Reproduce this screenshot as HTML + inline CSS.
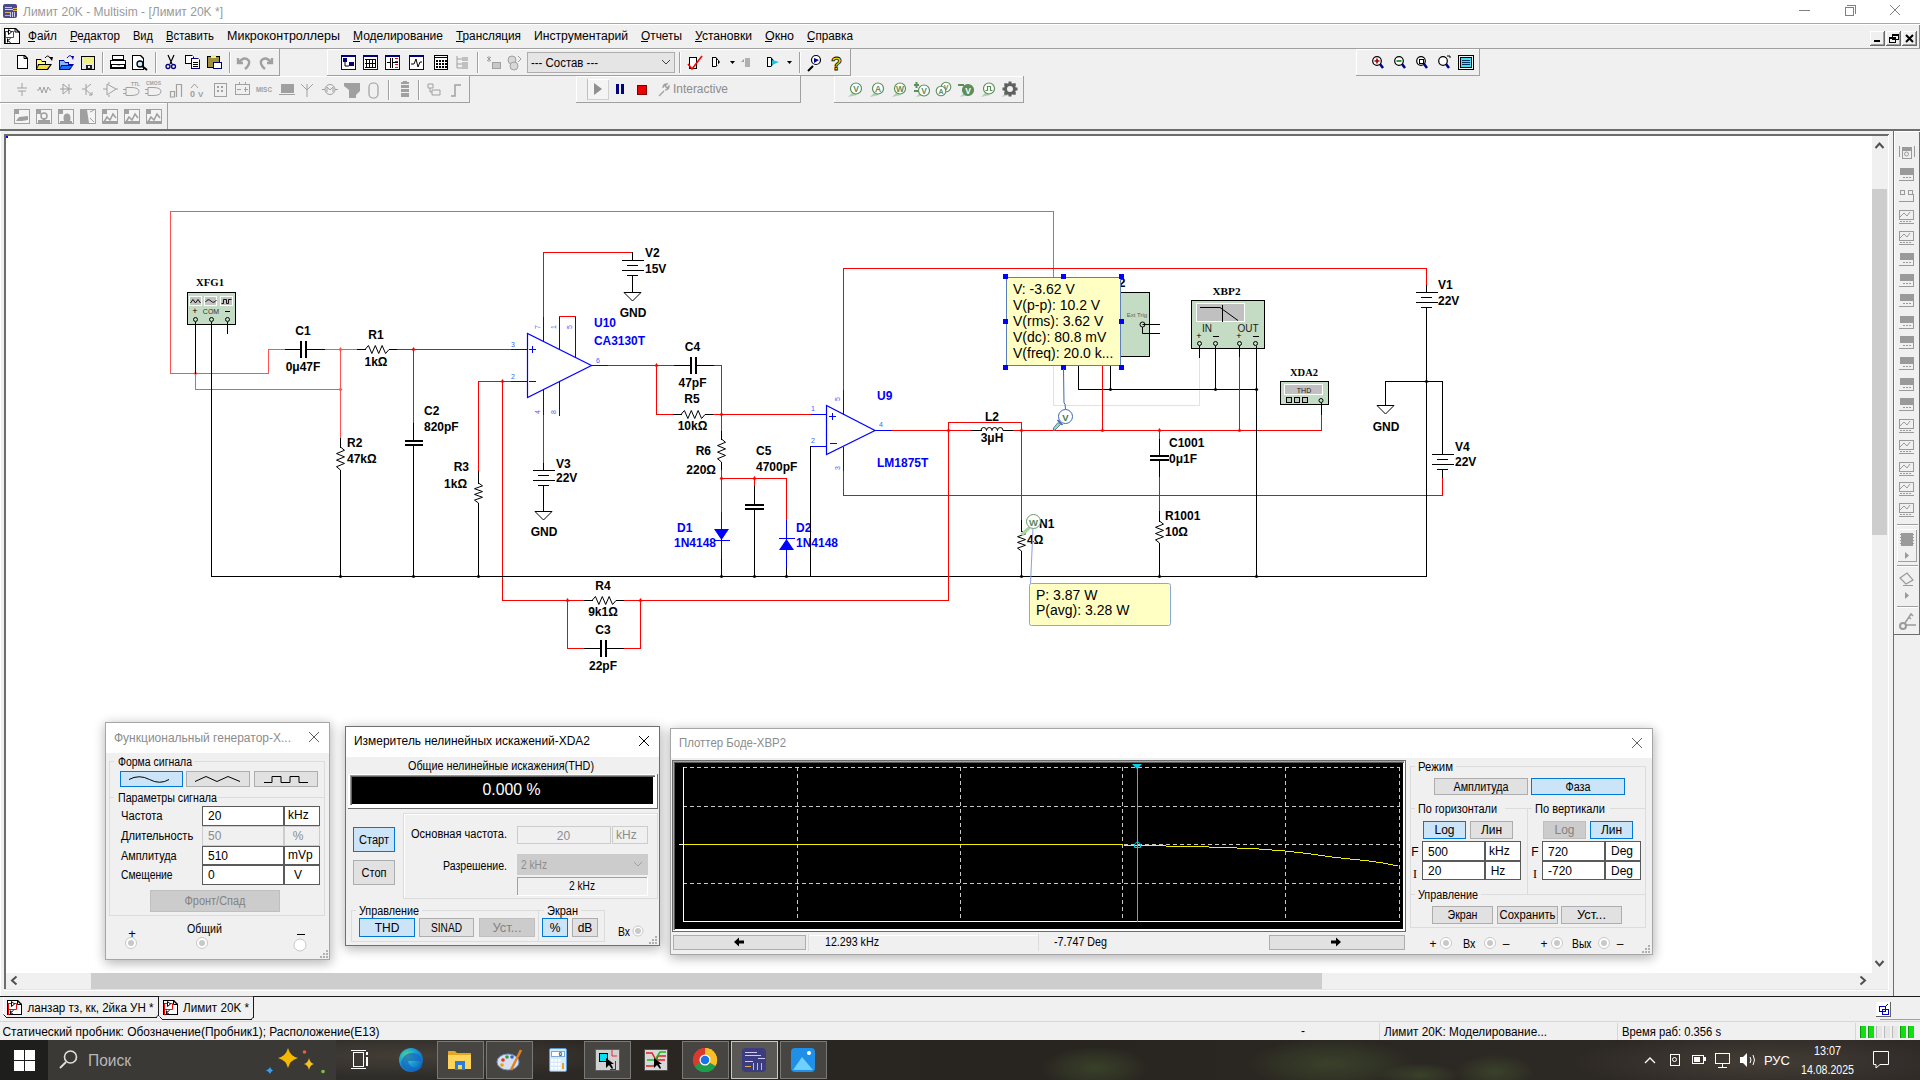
<!DOCTYPE html>
<html><head><meta charset="utf-8"><title>Multisim</title><style>html,body{margin:0;padding:0;width:1920px;height:1080px;overflow:hidden;background:#f0f0f0}svg{display:block}text{white-space:pre}</style></head><body><svg width="1920" height="1080" viewBox="0 0 1920 1080"><rect x="0" y="0" width="1920" height="1080" fill="#f0f0f0"/>
<rect x="0" y="0" width="1920" height="23" fill="#ffffff"/>
<rect x="0" y="23" width="1920" height="1" fill="#a8a8a8"/>
<rect x="3" y="4" width="14" height="14" rx="2" fill="#4a4a8c"/>
<rect x="5" y="7" width="7" height="1" fill="#c8c8e8"/>
<rect x="5" y="9" width="8" height="1" fill="#d0d0f0"/>
<rect x="5" y="12" width="5" height="1" fill="#e0b040"/>
<rect x="5" y="15" width="5" height="1" fill="#e0b040"/>
<rect x="13" y="8" width="4" height="1" fill="#e0b040"/>
<rect x="13" y="10" width="4" height="1" fill="#e0b040"/>
<rect x="10" y="12" width="1" height="5" fill="#c8c8e8"/>
<rect x="12" y="12" width="1" height="5" fill="#c8c8e8"/>
<rect x="14" y="12" width="1" height="5" fill="#c8c8e8"/>
<text x="23" y="16" font-family="Liberation Sans" font-size="12" fill="#999999" font-weight="normal" text-anchor="start" textLength="200" lengthAdjust="spacingAndGlyphs" >Лимит 20K - Multisim - [Лимит 20K *]</text>
<rect x="1799" y="10" width="11" height="1" fill="#808080"/>
<rect x="1845" y="7" width="9" height="9" fill="#ffffff"/>
<rect x="1845" y="7" width="9" height="1" fill="#808080"/>
<rect x="1845" y="15" width="9" height="1" fill="#808080"/>
<rect x="1845" y="7" width="1" height="9" fill="#808080"/>
<rect x="1853" y="7" width="1" height="9" fill="#808080"/>
<rect x="1847" y="5" width="9" height="1" fill="#808080"/>
<rect x="1855" y="5" width="1" height="9" fill="#808080"/>
<rect x="1845" y="7" width="9" height="9" fill="#ffffff"/>
<rect x="1845" y="7" width="9" height="1" fill="#808080"/>
<rect x="1845" y="15" width="9" height="1" fill="#808080"/>
<rect x="1845" y="7" width="1" height="9" fill="#808080"/>
<rect x="1853" y="7" width="1" height="9" fill="#808080"/>
<path d="M1890,5 L1900,15 M1900,5 L1890,15" stroke="#808080" stroke-width="1" fill="none" />
<rect x="0" y="48" width="1920" height="1" fill="#a0a0a0"/>
<rect x="0" y="24" width="1920" height="1" fill="#ffffff"/>
<rect x="0" y="24" width="1" height="24" fill="#ffffff"/>
<rect x="1919" y="25" width="1" height="23" fill="#8a8a8a"/>
<path d="M4,28 L16,28 L20,32 L20,44 L4,44 Z" fill="#000000" />
<path d="M5,29 L15,29 L19,33 L19,43 L5,43 Z" fill="#ffffff" />
<path d="M15,28 L15,32 L20,32" stroke="#000000" stroke-width="1" fill="none" />
<path d="M5,31.5 L9,31.5 M11,31.5 L13.5,31.5 L13.5,37.5 L5.5,37.5 M5.5,31.5 L5.5,43" stroke="#ff0000" stroke-width="1" fill="none" />
<path d="M8.5,29.5 L8.5,34.5 L11.5,32 Z M7.5,32 L8.5,32" stroke="#000000" stroke-width="1" fill="none" />
<path d="M7.5,38.5 L7.5,42.5 M7.5,40.5 L10.5,38.5 M7.5,40.5 L10.5,42.5" stroke="#000000" stroke-width="1" fill="none" />
<text x="28" y="40" font-family="Liberation Sans" font-size="12" fill="#000000" font-weight="normal" text-anchor="start" textLength="29" lengthAdjust="spacingAndGlyphs" >Файл</text>
<rect x="28" y="41" width="7" height="1" fill="#000000"/>
<text x="70" y="40" font-family="Liberation Sans" font-size="12" fill="#000000" font-weight="normal" text-anchor="start" textLength="50" lengthAdjust="spacingAndGlyphs" >Редактор</text>
<rect x="70" y="41" width="7" height="1" fill="#000000"/>
<text x="133" y="40" font-family="Liberation Sans" font-size="12" fill="#000000" font-weight="normal" text-anchor="start" textLength="20" lengthAdjust="spacingAndGlyphs" >Вид</text>
<text x="166" y="40" font-family="Liberation Sans" font-size="12" fill="#000000" font-weight="normal" text-anchor="start" textLength="48" lengthAdjust="spacingAndGlyphs" >Вставить</text>
<rect x="166" y="41" width="7" height="1" fill="#000000"/>
<text x="227" y="40" font-family="Liberation Sans" font-size="12" fill="#000000" font-weight="normal" text-anchor="start" textLength="113" lengthAdjust="spacingAndGlyphs" >Микроконтроллеры</text>
<text x="353" y="40" font-family="Liberation Sans" font-size="12" fill="#000000" font-weight="normal" text-anchor="start" textLength="90" lengthAdjust="spacingAndGlyphs" >Моделирование</text>
<rect x="353" y="41" width="7" height="1" fill="#000000"/>
<text x="456" y="40" font-family="Liberation Sans" font-size="12" fill="#000000" font-weight="normal" text-anchor="start" textLength="65" lengthAdjust="spacingAndGlyphs" >Трансляция</text>
<rect x="456" y="41" width="7" height="1" fill="#000000"/>
<text x="534" y="40" font-family="Liberation Sans" font-size="12" fill="#000000" font-weight="normal" text-anchor="start" textLength="94" lengthAdjust="spacingAndGlyphs" >Инструментарий</text>
<text x="641" y="40" font-family="Liberation Sans" font-size="12" fill="#000000" font-weight="normal" text-anchor="start" textLength="41" lengthAdjust="spacingAndGlyphs" >Отчеты</text>
<rect x="641" y="41" width="7" height="1" fill="#000000"/>
<text x="695" y="40" font-family="Liberation Sans" font-size="12" fill="#000000" font-weight="normal" text-anchor="start" textLength="57" lengthAdjust="spacingAndGlyphs" >Установки</text>
<rect x="695" y="41" width="7" height="1" fill="#000000"/>
<text x="765" y="40" font-family="Liberation Sans" font-size="12" fill="#000000" font-weight="normal" text-anchor="start" textLength="29" lengthAdjust="spacingAndGlyphs" >Окно</text>
<rect x="765" y="41" width="7" height="1" fill="#000000"/>
<text x="807" y="40" font-family="Liberation Sans" font-size="12" fill="#000000" font-weight="normal" text-anchor="start" textLength="46" lengthAdjust="spacingAndGlyphs" >Справка</text>
<rect x="807" y="41" width="7" height="1" fill="#000000"/>
<rect x="1870" y="31" width="15" height="15" fill="#f0f0f0"/>
<rect x="1870" y="31" width="15" height="1" fill="#ffffff"/>
<rect x="1870" y="31" width="1" height="15" fill="#ffffff"/>
<rect x="1870" y="45" width="15" height="1" fill="#696969"/>
<rect x="1884" y="31" width="1" height="15" fill="#696969"/>
<rect x="1871" y="44" width="13" height="1" fill="#a0a0a0"/>
<rect x="1883" y="32" width="1" height="13" fill="#a0a0a0"/>
<rect x="1886" y="31" width="15" height="15" fill="#f0f0f0"/>
<rect x="1886" y="31" width="15" height="1" fill="#ffffff"/>
<rect x="1886" y="31" width="1" height="15" fill="#ffffff"/>
<rect x="1886" y="45" width="15" height="1" fill="#696969"/>
<rect x="1900" y="31" width="1" height="15" fill="#696969"/>
<rect x="1887" y="44" width="13" height="1" fill="#a0a0a0"/>
<rect x="1899" y="32" width="1" height="13" fill="#a0a0a0"/>
<rect x="1902" y="31" width="15" height="15" fill="#f0f0f0"/>
<rect x="1902" y="31" width="15" height="1" fill="#ffffff"/>
<rect x="1902" y="31" width="1" height="15" fill="#ffffff"/>
<rect x="1902" y="45" width="15" height="1" fill="#696969"/>
<rect x="1916" y="31" width="1" height="15" fill="#696969"/>
<rect x="1903" y="44" width="13" height="1" fill="#a0a0a0"/>
<rect x="1915" y="32" width="1" height="13" fill="#a0a0a0"/>
<rect x="1874" y="40" width="6" height="2" fill="#000"/>
<rect x="1889" y="37" width="7" height="1" fill="#000"/>
<rect x="1889" y="42" width="7" height="1" fill="#000"/>
<rect x="1889" y="37" width="1" height="6" fill="#000"/>
<rect x="1895" y="37" width="1" height="6" fill="#000"/>
<rect x="1889" y="38" width="7" height="1" fill="#000"/>
<rect x="1892" y="34" width="7" height="1" fill="#000"/>
<rect x="1892" y="39" width="7" height="1" fill="#000"/>
<rect x="1892" y="34" width="1" height="6" fill="#000"/>
<rect x="1898" y="34" width="1" height="6" fill="#000"/>
<rect x="1892" y="35" width="7" height="1" fill="#000"/>
<path d="M1906,35 L1913,42 M1913,35 L1906,42" stroke="#000" stroke-width="2" fill="none" />
<rect x="0" y="49" width="280" height="1" fill="#ffffff"/>
<rect x="0" y="49" width="1" height="27" fill="#ffffff"/>
<rect x="0" y="75" width="280" height="1" fill="#a0a0a0"/>
<rect x="279" y="49" width="1" height="27" fill="#a0a0a0"/>
<rect x="327" y="49" width="524" height="1" fill="#ffffff"/>
<rect x="327" y="49" width="1" height="27" fill="#ffffff"/>
<rect x="327" y="75" width="524" height="1" fill="#a0a0a0"/>
<rect x="850" y="49" width="1" height="27" fill="#a0a0a0"/>
<rect x="1356" y="49" width="124" height="1" fill="#ffffff"/>
<rect x="1356" y="49" width="1" height="27" fill="#ffffff"/>
<rect x="1356" y="75" width="124" height="1" fill="#a0a0a0"/>
<rect x="1479" y="49" width="1" height="27" fill="#a0a0a0"/>
<rect x="0" y="76" width="470" height="1" fill="#ffffff"/>
<rect x="0" y="76" width="1" height="27" fill="#ffffff"/>
<rect x="0" y="102" width="470" height="1" fill="#a0a0a0"/>
<rect x="469" y="76" width="1" height="27" fill="#a0a0a0"/>
<rect x="576" y="76" width="225" height="1" fill="#ffffff"/>
<rect x="576" y="76" width="1" height="27" fill="#ffffff"/>
<rect x="576" y="102" width="225" height="1" fill="#a0a0a0"/>
<rect x="800" y="76" width="1" height="27" fill="#a0a0a0"/>
<rect x="834" y="76" width="190" height="1" fill="#ffffff"/>
<rect x="834" y="76" width="1" height="27" fill="#ffffff"/>
<rect x="834" y="102" width="190" height="1" fill="#a0a0a0"/>
<rect x="1023" y="76" width="1" height="27" fill="#a0a0a0"/>
<rect x="0" y="103" width="168" height="1" fill="#ffffff"/>
<rect x="0" y="103" width="1" height="27" fill="#ffffff"/>
<rect x="0" y="129" width="168" height="1" fill="#a0a0a0"/>
<rect x="167" y="103" width="1" height="27" fill="#a0a0a0"/>
<rect x="0" y="129" width="1920" height="2" fill="#6d6d6d"/>
<rect x="102" y="52" width="1" height="21" fill="#a0a0a0"/>
<rect x="103" y="52" width="1" height="21" fill="#ffffff"/>
<rect x="155" y="52" width="1" height="21" fill="#a0a0a0"/>
<rect x="156" y="52" width="1" height="21" fill="#ffffff"/>
<rect x="229" y="52" width="1" height="21" fill="#a0a0a0"/>
<rect x="230" y="52" width="1" height="21" fill="#ffffff"/>
<rect x="477" y="52" width="1" height="21" fill="#a0a0a0"/>
<rect x="478" y="52" width="1" height="21" fill="#ffffff"/>
<rect x="679" y="52" width="1" height="21" fill="#a0a0a0"/>
<rect x="680" y="52" width="1" height="21" fill="#ffffff"/>
<rect x="799" y="52" width="1" height="21" fill="#a0a0a0"/>
<rect x="800" y="52" width="1" height="21" fill="#ffffff"/>
<path d="M17,55 L25,55 L28,58 L28,69 L17,69 Z" fill="#000" />
<path d="M18,56 L24,56 L27,59 L27,68 L18,68 Z" fill="#fff" />
<path d="M24,55.5 L24,58.5 L28,58.5" stroke="#000" stroke-width="1" fill="none" />
<path d="M36,59 L41,59 L42,61 L46,61 L46,64 L52,64 L48,70 L36,70 Z" fill="#000" />
<path d="M37,60 L41,60 L42,62 L45,62 L45,64 L38,64 L37,68 Z" fill="#ffff80" />
<path d="M39,65 L50,65 L47,69 L37,69 Z" fill="#f0e040" />
<path d="M45,58 Q48,54 50,58" stroke="#000" stroke-width="1" fill="none" />
<path d="M49,57 L53,57 L52,61 Z" fill="#000" />
<path d="M59,60 L64,60 L65,62 L69,62 L69,64 L74,64 L70,70 L59,70 Z" fill="#0000a0" />
<path d="M60,61 L64,61 L65,63 L68,63 L68,65 L61,65 L60,68 Z" fill="#80b8ff" />
<path d="M62,66 L72,66 L69,69 L60,69 Z" fill="#1f6fff" />
<path d="M67,58 Q70,54 72,57" stroke="#0000a0" stroke-width="1" fill="none" />
<path d="M71,56 L74,56 L73,60 Z" fill="#0000a0" />
<path d="M81,56 L95,56 L95,70 L81,70 Z" fill="#000" />
<path d="M82,57 L94,57 L94,69 L82,69 Z" fill="#e8e8e8" />
<rect x="84" y="57" width="9" height="6" fill="#f0f080"/>
<rect x="86" y="65" width="6" height="4" fill="#202020"/>
<rect x="88" y="66" width="2" height="2" fill="#e8e8e8"/>
<path d="M112,55 L124,55 L124,60 L112,60 Z" fill="#000" />
<rect x="113" y="56" width="10" height="3" fill="#fff"/>
<path d="M110,60 L126,60 L126,69 L110,69 Z" fill="#000" />
<rect x="111" y="61" width="14" height="3" fill="#fff"/>
<rect x="112" y="65" width="12" height="2" fill="#fff"/>
<rect x="117" y="65" width="3" height="1" fill="#e0d000"/>
<path d="M132,55 L141,55 L144,58 L144,70 L132,70 Z" fill="#000" />
<path d="M133,56 L140,56 L143,59 L143,69 L133,69 Z" fill="#fff" />
<circle cx="140" cy="64" r="3" stroke="#000" stroke-width="1.3" fill="#c0f0ff"/>
<path d="M142,66 L147,70" stroke="#000" stroke-width="2" fill="none" />
<path d="M168,55 L172,64 M174,55 L170,64" stroke="#000" stroke-width="1.2" fill="none" />
<circle cx="168" cy="66.5" r="2" stroke="#000080" stroke-width="1.3" fill="none"/>
<circle cx="173.5" cy="66.5" r="2" stroke="#000080" stroke-width="1.3" fill="none"/>
<path d="M185,55 L192,55 L194,57 L194,64 L185,64 Z" fill="#000" />
<rect x="186" y="56" width="7" height="7" fill="#fff"/>
<path d="M191,58 L198,58 L200,60 L200,69 L191,69 Z" fill="#000080" />
<rect x="192" y="59" width="7" height="9" fill="#fff"/>
<rect x="193" y="62" width="5" height="1" fill="#000"/>
<rect x="193" y="64" width="5" height="1" fill="#000"/>
<rect x="193" y="66" width="5" height="1" fill="#000"/>
<path d="M207,56 L220,56 L220,68 L207,68 Z" fill="#000" />
<rect x="208" y="57" width="11" height="10" fill="#a09040"/>
<rect x="211" y="55" width="5" height="3" fill="#f0f080"/>
<path d="M213,62 L222,62 L222,69 L213,69 Z" fill="#000080" />
<rect x="214" y="63" width="7" height="5" fill="#fff"/>
<path d="M238,58 L238,63 L243,63 M238,63 Q245,55 249,61 Q250,65 245,69" stroke="#a0a0a0" stroke-width="2.4" fill="none" />
<path d="M272,58 L272,63 L267,63 M272,63 Q265,55 261,61 Q260,65 265,69" stroke="#a0a0a0" stroke-width="2.4" fill="none" />
<rect x="341" y="55" width="15" height="15" fill="#fff"/>
<rect x="341" y="55" width="15" height="1" fill="#000080"/>
<rect x="341" y="69" width="15" height="1" fill="#000080"/>
<rect x="341" y="55" width="1" height="15" fill="#000080"/>
<rect x="355" y="55" width="1" height="15" fill="#000080"/>
<rect x="341" y="56" width="15" height="1" fill="#000080"/>
<rect x="343" y="58" width="4" height="4" fill="#000080"/>
<rect x="349" y="62" width="5" height="4" fill="#000080"/>
<path d="M345,62 L345,66 L349,66" stroke="#000" stroke-width="1" fill="none" />
<rect x="363" y="55" width="15" height="15" fill="#fff"/>
<rect x="363" y="55" width="15" height="1" fill="#000080"/>
<rect x="363" y="69" width="15" height="1" fill="#000080"/>
<rect x="363" y="55" width="1" height="15" fill="#000080"/>
<rect x="377" y="55" width="1" height="15" fill="#000080"/>
<rect x="363" y="56" width="15" height="1" fill="#000080"/>
<rect x="366" y="59" width="1" height="9" fill="#000"/>
<rect x="369" y="59" width="1" height="9" fill="#000"/>
<rect x="372" y="59" width="1" height="9" fill="#000"/>
<rect x="375" y="59" width="1" height="9" fill="#000"/>
<rect x="365" y="59" width="11" height="1" fill="#000"/>
<rect x="365" y="63" width="11" height="1" fill="#000"/>
<rect x="365" y="67" width="11" height="1" fill="#000"/>
<rect x="385" y="55" width="15" height="15" fill="#fff"/>
<rect x="385" y="55" width="15" height="1" fill="#000080"/>
<rect x="385" y="69" width="15" height="1" fill="#000080"/>
<rect x="385" y="55" width="1" height="15" fill="#000080"/>
<rect x="399" y="55" width="1" height="15" fill="#000080"/>
<rect x="385" y="56" width="15" height="1" fill="#000080"/>
<rect x="390" y="58" width="1" height="10" fill="#000"/>
<rect x="392" y="58" width="1" height="10" fill="#000"/>
<rect x="387" y="62" width="3" height="1" fill="#000"/>
<rect x="393" y="62" width="5" height="1" fill="#000"/>
<rect x="395" y="58" width="3" height="1" fill="#ff0000"/>
<rect x="395" y="61" width="3" height="1" fill="#ff0000"/>
<rect x="395" y="64" width="3" height="1" fill="#ff0000"/>
<rect x="395" y="67" width="3" height="1" fill="#ff0000"/>
<rect x="409" y="55" width="15" height="15" fill="#fff"/>
<rect x="409" y="55" width="15" height="1" fill="#000080"/>
<rect x="409" y="69" width="15" height="1" fill="#000080"/>
<rect x="409" y="55" width="1" height="15" fill="#000080"/>
<rect x="423" y="55" width="1" height="15" fill="#000080"/>
<rect x="409" y="56" width="15" height="1" fill="#000080"/>
<path d="M411,64 L414,64 L416,59 L418,67 L420,62 L422,62" stroke="#000" stroke-width="1" fill="none" />
<rect x="434" y="55" width="14" height="15" fill="#fff"/>
<rect x="434" y="55" width="14" height="1" fill="#000"/>
<rect x="434" y="69" width="14" height="1" fill="#000"/>
<rect x="434" y="55" width="1" height="15" fill="#000"/>
<rect x="447" y="55" width="1" height="15" fill="#000"/>
<rect x="434" y="57" width="14" height="1" fill="#000"/>
<rect x="436" y="60" width="2" height="2" fill="#000"/>
<rect x="439" y="60" width="2" height="2" fill="#000"/>
<rect x="442" y="60" width="2" height="2" fill="#000"/>
<rect x="445" y="60" width="2" height="2" fill="#000"/>
<rect x="436" y="63" width="2" height="2" fill="#000"/>
<rect x="439" y="63" width="2" height="2" fill="#000"/>
<rect x="442" y="63" width="2" height="2" fill="#000"/>
<rect x="445" y="63" width="2" height="2" fill="#000"/>
<rect x="436" y="66" width="2" height="2" fill="#000"/>
<rect x="439" y="66" width="2" height="2" fill="#000"/>
<rect x="442" y="66" width="2" height="2" fill="#000"/>
<rect x="445" y="66" width="2" height="2" fill="#000"/>
<path d="M457,56 L457,68 M457,59 L462,59 M457,64 L462,64 M457,68 L462,68" stroke="#a0a0a0" stroke-width="1" fill="none" />
<rect x="462" y="57" width="6" height="4" fill="#c0c0c0"/>
<rect x="462" y="62" width="6" height="4" fill="#c0c0c0"/>
<rect x="462" y="66" width="6" height="3" fill="#c0c0c0"/>
<path d="M487,57 L491,61 M487,61 L491,57 M489,56 L489,62" stroke="#a0a0a0" stroke-width="1" fill="none" />
<rect x="492" y="62" width="8" height="6" fill="#c8c8c8"/>
<rect x="492" y="62" width="9" height="1" fill="#a0a0a0"/>
<rect x="492" y="68" width="9" height="1" fill="#a0a0a0"/>
<rect x="492" y="62" width="1" height="7" fill="#a0a0a0"/>
<rect x="500" y="62" width="1" height="7" fill="#a0a0a0"/>
<circle cx="512" cy="60" r="4" stroke="#a0a0a0" stroke-width="1" fill="#d8d8d8"/>
<circle cx="514" cy="66" r="4" stroke="#a0a0a0" stroke-width="1" fill="#d8d8d8"/>
<path d="M518,56 L521,59 L518,62" stroke="#a0a0a0" stroke-width="1" fill="none" />
<rect x="527" y="52" width="148" height="21" fill="#e5e5e5"/>
<rect x="527" y="52" width="148" height="1" fill="#adadad"/>
<rect x="527" y="72" width="148" height="1" fill="#adadad"/>
<rect x="527" y="52" width="1" height="21" fill="#adadad"/>
<rect x="674" y="52" width="1" height="21" fill="#adadad"/>
<text x="531" y="67" font-family="Liberation Sans" font-size="12" fill="#000" font-weight="normal" text-anchor="start" textLength="67" lengthAdjust="spacingAndGlyphs" >--- Состав ---</text>
<path d="M662,60 L666,64 L670,60" stroke="#404040" stroke-width="1" fill="none" />
<path d="M689,57 L697,57 L697,69 L689,69 Z" fill="#000" />
<rect x="690" y="58" width="6" height="10" fill="#fff"/>
<path d="M688,64 L692,69 L702,56" stroke="#ff0000" stroke-width="1.6" fill="none" />
<path d="M712,57 L716,57 L720,62 L716,67 L712,67 Z" fill="#000" />
<rect x="713" y="58" width="3" height="8" fill="#fff"/>
<rect x="717" y="60" width="1" height="5" fill="#fff"/>
<path d="M730,61 L735,61 L732.5,64 Z" fill="#000" />
<path d="M745,58 L750,58 L750,67 L745,67 Z" fill="#b0b0b0" />
<path d="M744,62 L741,62 L744,59 Z" fill="#a0a0a0" />
<path d="M767,57 L771,57 L775,62 L771,67 L767,67 Z" fill="#000" />
<rect x="768" y="58" width="3" height="8" fill="#fff"/>
<path d="M772,60 L779,62 L772,65 Z" fill="#20c0e0" />
<path d="M787,61 L792,61 L789.5,64 Z" fill="#000" />
<circle cx="816" cy="60" r="4.5" stroke="#000" stroke-width="1.2" fill="#fff"/>
<path d="M813,66 L808,71" stroke="#000" stroke-width="2" fill="none" />
<path d="M814,58 L819,60 L814,63 Z" fill="#0000a0" />
<text x="836.5" y="70" font-family="Liberation Sans" font-size="18" fill="#e8e000" font-weight="bold" text-anchor="middle" stroke="#000" stroke-width="0.8">?</text>
<circle cx="1377" cy="61" r="4.3" stroke="#000" stroke-width="1.2" fill="#fff"/>
<path d="M1380,64 L1383,68" stroke="#000090" stroke-width="2.5" fill="none" />
<path d="M1374.5,61 L1379.5,61 M1377,58.5 L1377,63.5" stroke="#a00000" stroke-width="1.6" fill="none" />
<circle cx="1399" cy="61" r="4.3" stroke="#000" stroke-width="1.2" fill="#fff"/>
<path d="M1402,64 L1405,68" stroke="#000090" stroke-width="2.5" fill="none" />
<path d="M1396.5,61 L1401.5,61" stroke="#008000" stroke-width="1.6" fill="none" />
<circle cx="1421" cy="61" r="4.3" stroke="#000" stroke-width="1.2" fill="#fff"/>
<path d="M1424,64 L1427,68" stroke="#000090" stroke-width="2.5" fill="none" />
<rect x="1419" y="59" width="5" height="1" fill="#000"/>
<rect x="1419" y="63" width="5" height="1" fill="#000"/>
<rect x="1419" y="59" width="1" height="5" fill="#000"/>
<rect x="1423" y="59" width="1" height="5" fill="#000"/>
<circle cx="1443" cy="61" r="4.3" stroke="#000" stroke-width="1.2" fill="#fff"/>
<path d="M1446,64 L1449,68" stroke="#000090" stroke-width="2.5" fill="none" />
<path d="M1447,56 L1450,56 L1450,58" stroke="#000" stroke-width="1" fill="none" />
<rect x="1458" y="55" width="16" height="1" fill="#000"/>
<rect x="1458" y="69" width="16" height="1" fill="#000"/>
<rect x="1458" y="55" width="1" height="15" fill="#000"/>
<rect x="1473" y="55" width="1" height="15" fill="#000"/>
<rect x="1460" y="57" width="12" height="11" fill="#000"/>
<rect x="1461" y="58" width="10" height="9" fill="#40e0f0"/>
<rect x="1462" y="60" width="8" height="1" fill="#003060"/>
<rect x="1462" y="62" width="8" height="1" fill="#003060"/>
<rect x="1462" y="64" width="8" height="1" fill="#003060"/>
<path d="M17,88 L27,88 M18,91 L26,91 M22,83 L22,88 M22,91 L22,96" stroke="#a0a0a0" stroke-width="1" fill="none" />
<path d="M37,90 L39,90 L40,87 L42,93 L44,87 L46,93 L48,87 L50,90 L51,90" stroke="#a0a0a0" stroke-width="1" fill="none" />
<path d="M60,89 L72,89 M63,84 L63,94 L69,89 Z M69,84 L69,94" stroke="#a0a0a0" stroke-width="1" fill="none" />
<path d="M82,89 L86,89 M86,84 L86,95 M86,88 L91,84 M86,90 L92,95 M89,95 L92,95 L92,92" stroke="#a0a0a0" stroke-width="1" fill="none" />
<path d="M103,89 L107,89 M107,84 L107,95 L116,89 Z M116,89 L118,89 M109,84 L109,82 M109,95 L109,97" stroke="#a0a0a0" stroke-width="1" fill="none" />
<text x="131" y="86" font-family="Liberation Sans" font-size="6" fill="#a0a0a0" font-weight="bold" text-anchor="start" textLength="9" lengthAdjust="spacingAndGlyphs" >TTL</text>
<path d="M126,87.5 L131,87.5 Q139,87.5 139,91.5 Q139,95.5 131,95.5 L126,95.5 Z M126,89.5 L123,89.5 M126,93.5 L123,93.5" stroke="#a0a0a0" stroke-width="1" fill="none" />
<text x="146" y="85" font-family="Liberation Sans" font-size="6" fill="#a0a0a0" font-weight="bold" text-anchor="start" textLength="15" lengthAdjust="spacingAndGlyphs" >CMOS</text>
<path d="M148,87.5 L153,87.5 Q161,87.5 161,91.5 Q161,95.5 153,95.5 L148,95.5 Z M148,89.5 L145,89.5 M148,93.5 L145,93.5" stroke="#a0a0a0" stroke-width="1" fill="none" />
<path d="M170.5,97 L170.5,91.5 L174.5,91.5 L174.5,97 Z M176.5,97 L176.5,84.5 L181.5,84.5 L181.5,97" stroke="#a0a0a0" stroke-width="1.2" fill="none" />
<text x="190" y="97" font-family="Liberation Sans" font-size="9" fill="#a0a0a0" font-weight="bold" text-anchor="start" >0</text>
<text x="198" y="97" font-family="Liberation Sans" font-size="8" fill="#a0a0a0" font-weight="bold" text-anchor="start" >V</text>
<path d="M191,88 L194.5,84 L198,88" stroke="#a0a0a0" stroke-width="1" fill="none" />
<rect x="214" y="83" width="13" height="1" fill="#a0a0a0"/>
<rect x="214" y="96" width="13" height="1" fill="#a0a0a0"/>
<rect x="214" y="83" width="1" height="14" fill="#a0a0a0"/>
<rect x="226" y="83" width="1" height="14" fill="#a0a0a0"/>
<rect x="217" y="86" width="2" height="2" fill="#a0a0a0"/>
<rect x="221" y="86" width="2" height="2" fill="#a0a0a0"/>
<rect x="217" y="90" width="2" height="2" fill="#a0a0a0"/>
<rect x="221" y="90" width="2" height="2" fill="#a0a0a0"/>
<rect x="235" y="84" width="15" height="1" fill="#a0a0a0"/>
<rect x="235" y="94" width="15" height="1" fill="#a0a0a0"/>
<rect x="235" y="84" width="1" height="11" fill="#a0a0a0"/>
<rect x="249" y="84" width="1" height="11" fill="#a0a0a0"/>
<rect x="237" y="89" width="4" height="1" fill="#a0a0a0"/>
<rect x="244" y="89" width="4" height="1" fill="#a0a0a0"/>
<rect x="245" y="87" width="1" height="5" fill="#a0a0a0"/>
<rect x="239" y="82" width="1" height="3" fill="#a0a0a0"/>
<rect x="245" y="82" width="1" height="3" fill="#a0a0a0"/>
<text x="256" y="92" font-family="Liberation Sans" font-size="8" fill="#a0a0a0" font-weight="bold" text-anchor="start" textLength="16" lengthAdjust="spacingAndGlyphs" >MISC</text>
<rect x="281" y="84" width="13" height="9" fill="#a0a0a0"/>
<rect x="279" y="94" width="16" height="1" fill="#a0a0a0"/>
<path d="M301,84 L307,90 L313,84 M307,84 L307,97" stroke="#a0a0a0" stroke-width="1" fill="none" />
<circle cx="330" cy="89.5" r="5" stroke="#a0a0a0" stroke-width="1" fill="none"/>
<path d="M322,89.5 L325,89.5 M335,89.5 L338,89.5 M327,92 L327,87 L330,90 L333,87 L333,92" stroke="#a0a0a0" stroke-width="1" fill="none" />
<path d="M344,83 L360,83 L360,91 L356,95 L356,98 L349,98 L349,90 L344,86 Z" fill="#a0a0a0" />
<rect x="369" y="83" width="9" height="15" rx="4" fill="none" stroke="#a0a0a0" stroke-width="1.2"/>
<rect x="388" y="80" width="1" height="20" fill="#a0a0a0"/>
<rect x="389" y="80" width="1" height="20" fill="#ffffff"/>
<rect x="401" y="82" width="8" height="15" fill="#a0a0a0"/>
<rect x="403" y="81" width="4" height="1" fill="#a0a0a0"/>
<rect x="399" y="84" width="12" height="1" fill="#f0f0f0"/>
<rect x="399" y="88" width="12" height="1" fill="#f0f0f0"/>
<rect x="399" y="92" width="12" height="1" fill="#f0f0f0"/>
<rect x="418" y="80" width="1" height="20" fill="#a0a0a0"/>
<rect x="419" y="80" width="1" height="20" fill="#ffffff"/>
<path d="M428,84 L433,84 L433,88 L428,88 Z M432,90 L440,90 L440,95 L432,95 Z M430,88 L430,92 L432,92" stroke="#a0a0a0" stroke-width="1" fill="none" />
<path d="M451,96 L455,96 L455,85 L461,85" stroke="#a0a0a0" stroke-width="1.5" fill="none" />
<rect x="587" y="79" width="22" height="21" fill="#f4f4f4"/>
<rect x="587" y="79" width="22" height="1" fill="#d0d0d0"/>
<rect x="587" y="99" width="22" height="1" fill="#d0d0d0"/>
<rect x="587" y="79" width="1" height="21" fill="#d0d0d0"/>
<rect x="608" y="79" width="1" height="21" fill="#d0d0d0"/>
<rect x="587" y="79" width="22" height="1" fill="#ffffff"/>
<rect x="587" y="79" width="1" height="21" fill="#c0c0c0"/>
<path d="M594,83 L602,89 L594,95 Z" fill="#909090" />
<rect x="616" y="84" width="3" height="10" fill="#000080"/>
<rect x="621" y="84" width="3" height="10" fill="#000080"/>
<rect x="637" y="85" width="10" height="10" fill="#ee0000"/>
<rect x="637" y="85" width="10" height="1" fill="#800000"/>
<rect x="637" y="94" width="10" height="1" fill="#800000"/>
<rect x="637" y="85" width="1" height="10" fill="#800000"/>
<rect x="646" y="85" width="1" height="10" fill="#800000"/>
<path d="M659,96 L664,91 M663,88 Q663,84 667,84 L665,86 L667,88 L669,86 Q669,90 665,90" stroke="#a0a0a0" stroke-width="1.3" fill="none" />
<text x="673" y="93" font-family="Liberation Sans" font-size="12" fill="#8c8c8c" font-weight="normal" text-anchor="start" textLength="55" lengthAdjust="spacingAndGlyphs" >Interactive</text>
<path d="M848,97 L853,92 L857,95 Z" fill="#a8d4a8" />
<circle cx="856" cy="88.5" r="5.5" stroke="#5b8f5b" stroke-width="1.2" fill="#ffffff"/>
<text x="856" y="92.0" font-family="Liberation Sans" font-size="8.5" fill="#5b8f5b" font-weight="bold" text-anchor="middle" >V</text>
<path d="M870,97 L875,92 L879,95 Z" fill="#a8d4a8" />
<circle cx="878" cy="88.5" r="5.5" stroke="#5b8f5b" stroke-width="1.2" fill="#ffffff"/>
<text x="878" y="92.0" font-family="Liberation Sans" font-size="8.5" fill="#5b8f5b" font-weight="bold" text-anchor="middle" >A</text>
<path d="M892,97 L897,92 L901,95 Z" fill="#a8d4a8" />
<circle cx="900" cy="88.5" r="5.5" stroke="#5b8f5b" stroke-width="1.2" fill="#ffffff"/>
<text x="900" y="92.0" font-family="Liberation Sans" font-size="8.5" fill="#5b8f5b" font-weight="bold" text-anchor="middle" >W</text>
<rect x="914" y="84" width="5" height="2" fill="#5b8f5b"/>
<rect x="915.5" y="82" width="2" height="6" fill="#5b8f5b"/>
<rect x="914" y="90" width="5" height="2" fill="#5b8f5b"/>
<path d="M916,97 L921,92 L925,95 Z" fill="#a8d4a8" />
<circle cx="924" cy="90.5" r="5.5" stroke="#5b8f5b" stroke-width="1.2" fill="#ffffff"/>
<text x="924" y="94.0" font-family="Liberation Sans" font-size="8.5" fill="#5b8f5b" font-weight="bold" text-anchor="middle" >V</text>
<circle cx="946" cy="87" r="4.8" stroke="#5b8f5b" stroke-width="1.1" fill="#fff"/>
<text x="946" y="90" font-family="Liberation Sans" font-size="7" fill="#5b8f5b" font-weight="bold" text-anchor="middle" >V</text>
<circle cx="941" cy="91" r="4.8" stroke="#5b8f5b" stroke-width="1.1" fill="#fff"/>
<text x="941" y="94" font-family="Liberation Sans" font-size="7" fill="#5b8f5b" font-weight="bold" text-anchor="middle" >A</text>
<rect x="958" y="84" width="6" height="2" fill="#5b8f5b"/>
<path d="M960,97 L965,92 L969,95 Z" fill="#a8d4a8" />
<circle cx="968" cy="90" r="5.5" stroke="#5b8f5b" stroke-width="1.2" fill="#5b8f5b"/>
<text x="968" y="93.5" font-family="Liberation Sans" font-size="8.5" fill="#ffffff" font-weight="bold" text-anchor="middle" >V</text>
<path d="M981,97 L986,92 L990,95 Z" fill="#a8d4a8" />
<circle cx="989" cy="88.5" r="5.5" stroke="#5b8f5b" stroke-width="1.2" fill="#ffffff"/>
<path d="M985.5,90.5 L987.5,90.5 L987.5,86.5 L990.5,86.5 L990.5,90.5 L992.5,90.5" stroke="#5b8f5b" stroke-width="1.2" fill="none" />
<path d="M1002,97 L1006,92 L1009,95 Z" fill="#a8d4a8" />
<circle cx="1010" cy="89" r="4.5" stroke="#606060" stroke-width="3" fill="none"/>
<circle cx="1010" cy="89" r="2" stroke="none" stroke-width="1" fill="#f0f0f0"/>
<rect x="1014.50" y="87.50" width="3" height="3" fill="#606060"/>
<rect x="1012.74" y="91.74" width="3" height="3" fill="#606060"/>
<rect x="1008.50" y="93.50" width="3" height="3" fill="#606060"/>
<rect x="1004.26" y="91.74" width="3" height="3" fill="#606060"/>
<rect x="1002.50" y="87.50" width="3" height="3" fill="#606060"/>
<rect x="1004.26" y="83.26" width="3" height="3" fill="#606060"/>
<rect x="1008.50" y="81.50" width="3" height="3" fill="#606060"/>
<rect x="1012.74" y="83.26" width="3" height="3" fill="#606060"/>
<rect x="14" y="109" width="16" height="15" fill="#a0a0a0"/>
<rect x="15" y="110" width="14" height="13" fill="#f4f4f4"/>
<rect x="15" y="110" width="4" height="4" fill="#a0a0a0"/>
<path d="M16,121 L19,117 L28,116 L28,120 L22,121 Z" fill="#a0a0a0" />
<rect x="36" y="109" width="16" height="15" fill="#a0a0a0"/>
<rect x="37" y="110" width="14" height="13" fill="#f4f4f4"/>
<rect x="37" y="110" width="4" height="4" fill="#a0a0a0"/>
<circle cx="44" cy="116" r="3" stroke="#a0a0a0" stroke-width="1.5" fill="none"/>
<rect x="43" y="118" width="2" height="5" fill="#a0a0a0"/>
<rect x="38" y="120" width="12" height="3" fill="#a0a0a0"/>
<rect x="58" y="109" width="16" height="15" fill="#a0a0a0"/>
<rect x="59" y="110" width="14" height="13" fill="#f4f4f4"/>
<rect x="59" y="110" width="4" height="4" fill="#a0a0a0"/>
<ellipse cx="67" cy="118" rx="3.5" ry="4.5" fill="#a0a0a0"/>
<rect x="60" y="121" width="12" height="2" fill="#a0a0a0"/>
<rect x="80" y="109" width="16" height="15" fill="#a0a0a0"/>
<rect x="81" y="110" width="14" height="13" fill="#f4f4f4"/>
<rect x="81" y="110" width="4" height="4" fill="#a0a0a0"/>
<path d="M81,110 L87,110 L89,123 L81,123 Z" fill="#a0a0a0" />
<path d="M90,112 L94,110 M90,118 L94,122" stroke="#a0a0a0" stroke-width="1" fill="none" />
<rect x="102" y="109" width="16" height="15" fill="#a0a0a0"/>
<rect x="103" y="110" width="14" height="13" fill="#f4f4f4"/>
<rect x="103" y="110" width="4" height="4" fill="#a0a0a0"/>
<path d="M104,122 L107,117 L110,120 L113,114 L116,118" stroke="#a0a0a0" stroke-width="1.6" fill="none" />
<rect x="103" y="121" width="14" height="2" fill="#a0a0a0"/>
<rect x="124" y="109" width="16" height="15" fill="#a0a0a0"/>
<rect x="125" y="110" width="14" height="13" fill="#f4f4f4"/>
<rect x="125" y="110" width="4" height="4" fill="#a0a0a0"/>
<path d="M126,122 L129,117 L132,120 L135,114 L138,118" stroke="#a0a0a0" stroke-width="1.6" fill="none" />
<rect x="125" y="121" width="14" height="2" fill="#a0a0a0"/>
<rect x="146" y="109" width="16" height="15" fill="#a0a0a0"/>
<rect x="147" y="110" width="14" height="13" fill="#f4f4f4"/>
<rect x="147" y="110" width="4" height="4" fill="#a0a0a0"/>
<path d="M148,122 L151,117 L154,120 L157,114 L160,118" stroke="#a0a0a0" stroke-width="1.6" fill="none" />
<rect x="147" y="121" width="14" height="2" fill="#a0a0a0"/>
<rect x="0" y="131" width="1" height="865" fill="#ffffff"/>
<rect x="1893" y="130" width="1" height="867" fill="#6d6d6d"/>
<rect x="0" y="996" width="1895" height="1" fill="#6d6d6d"/>
<rect x="4" y="134" width="1885" height="2" fill="#6d6d6d"/>
<rect x="4" y="134" width="2" height="856" fill="#6d6d6d"/>
<rect x="6" y="136" width="1866" height="837" fill="#ffffff"/>
<rect x="6" y="136" width="2" height="2" fill="#0000ff"/>
<rect x="4" y="989" width="1885" height="1" fill="#e3e3e3"/>
<rect x="4" y="990" width="1885" height="1" fill="#ffffff"/>
<rect x="1888" y="135" width="1" height="856" fill="#ffffff"/>
<rect x="1872" y="136" width="16" height="853" fill="#f0f0f0"/>
<rect x="1872" y="189" width="15" height="346" fill="#cdcdcd"/>
<path d="M1875.5,148 L1879.5,143.5 L1883.5,148" stroke="#505050" stroke-width="2" fill="none" />
<path d="M1875.5,961 L1879.5,965.5 L1883.5,961" stroke="#505050" stroke-width="2" fill="none" />
<rect x="6" y="973" width="1866" height="16" fill="#f0f0f0"/>
<rect x="91" y="973" width="1231" height="16" fill="#cdcdcd"/>
<path d="M16.5,976.5 L12,980.5 L16.5,984.5" stroke="#505050" stroke-width="2" fill="none" />
<path d="M1860.5,976.5 L1865,980.5 L1860.5,984.5" stroke="#505050" stroke-width="2" fill="none" />
<rect x="1895" y="131" width="25" height="504" fill="#f0f0f0"/>
<rect x="1894" y="131" width="1" height="504" fill="#ffffff"/>
<rect x="1919" y="131" width="1" height="504" fill="#6d6d6d"/>
<rect x="1894" y="634" width="26" height="1" fill="#6d6d6d"/>
<rect x="1894" y="131" width="26" height="1" fill="#ffffff"/>
<rect x="1903" y="147" width="8" height="4" fill="#9a9a9a"/>
<rect x="1902" y="147" width="10" height="1" fill="#9a9a9a"/>
<rect x="1902" y="158" width="10" height="1" fill="#9a9a9a"/>
<rect x="1902" y="147" width="1" height="12" fill="#9a9a9a"/>
<rect x="1911" y="147" width="1" height="12" fill="#9a9a9a"/>
<rect x="1899" y="146" width="1" height="11" fill="#9a9a9a"/>
<rect x="1914" y="146" width="1" height="11" fill="#9a9a9a"/>
<circle cx="1906.5" cy="154" r="2" stroke="#9a9a9a" stroke-width="1" fill="none"/>
<rect x="1900" y="168" width="14" height="7" fill="#9a9a9a"/>
<rect x="1899" y="180" width="15" height="1" fill="#9a9a9a"/>
<rect x="1913" y="175" width="1" height="6" fill="#9a9a9a"/>
<rect x="1903" y="177" width="2" height="1" fill="#9a9a9a"/>
<rect x="1906" y="177" width="2" height="1" fill="#9a9a9a"/>
<rect x="1909" y="177" width="2" height="1" fill="#9a9a9a"/>
<rect x="1900" y="190" width="5" height="1" fill="#9a9a9a"/>
<rect x="1900" y="194" width="5" height="1" fill="#9a9a9a"/>
<rect x="1900" y="190" width="1" height="5" fill="#9a9a9a"/>
<rect x="1904" y="190" width="1" height="5" fill="#9a9a9a"/>
<rect x="1908" y="190" width="5" height="1" fill="#9a9a9a"/>
<rect x="1908" y="194" width="5" height="1" fill="#9a9a9a"/>
<rect x="1908" y="190" width="1" height="5" fill="#9a9a9a"/>
<rect x="1912" y="190" width="1" height="5" fill="#9a9a9a"/>
<rect x="1899" y="201" width="15" height="1" fill="#9a9a9a"/>
<rect x="1913" y="194" width="1" height="8" fill="#9a9a9a"/>
<rect x="1899" y="210" width="15" height="1" fill="#9a9a9a"/>
<rect x="1899" y="219" width="15" height="1" fill="#9a9a9a"/>
<rect x="1899" y="210" width="1" height="10" fill="#9a9a9a"/>
<rect x="1913" y="210" width="1" height="10" fill="#9a9a9a"/>
<path d="M1900,217 L1904,213 L1907,216 L1910,212" stroke="#9a9a9a" stroke-width="1" fill="none" />
<rect x="1899" y="223" width="15" height="1" fill="#9a9a9a"/>
<rect x="1900" y="221" width="2" height="1" fill="#9a9a9a"/>
<rect x="1903" y="221" width="2" height="1" fill="#9a9a9a"/>
<rect x="1906" y="221" width="2" height="1" fill="#9a9a9a"/>
<rect x="1909" y="221" width="2" height="1" fill="#9a9a9a"/>
<rect x="1899" y="231" width="15" height="1" fill="#9a9a9a"/>
<rect x="1899" y="240" width="15" height="1" fill="#9a9a9a"/>
<rect x="1899" y="231" width="1" height="10" fill="#9a9a9a"/>
<rect x="1913" y="231" width="1" height="10" fill="#9a9a9a"/>
<path d="M1900,238 L1904,234 L1907,237 L1910,233" stroke="#9a9a9a" stroke-width="1" fill="none" />
<rect x="1899" y="244" width="15" height="1" fill="#9a9a9a"/>
<rect x="1900" y="242" width="2" height="1" fill="#9a9a9a"/>
<rect x="1903" y="242" width="2" height="1" fill="#9a9a9a"/>
<rect x="1906" y="242" width="2" height="1" fill="#9a9a9a"/>
<rect x="1909" y="242" width="2" height="1" fill="#9a9a9a"/>
<rect x="1900" y="253" width="14" height="7" fill="#9a9a9a"/>
<rect x="1899" y="265" width="15" height="1" fill="#9a9a9a"/>
<rect x="1913" y="260" width="1" height="6" fill="#9a9a9a"/>
<rect x="1903" y="262" width="2" height="1" fill="#9a9a9a"/>
<rect x="1906" y="262" width="2" height="1" fill="#9a9a9a"/>
<rect x="1909" y="262" width="2" height="1" fill="#9a9a9a"/>
<rect x="1900" y="274" width="14" height="7" fill="#9a9a9a"/>
<rect x="1899" y="286" width="15" height="1" fill="#9a9a9a"/>
<rect x="1913" y="281" width="1" height="6" fill="#9a9a9a"/>
<rect x="1903" y="283" width="2" height="1" fill="#9a9a9a"/>
<rect x="1906" y="283" width="2" height="1" fill="#9a9a9a"/>
<rect x="1909" y="283" width="2" height="1" fill="#9a9a9a"/>
<rect x="1900" y="294" width="14" height="7" fill="#9a9a9a"/>
<rect x="1899" y="306" width="15" height="1" fill="#9a9a9a"/>
<rect x="1913" y="301" width="1" height="6" fill="#9a9a9a"/>
<rect x="1903" y="303" width="2" height="1" fill="#9a9a9a"/>
<rect x="1906" y="303" width="2" height="1" fill="#9a9a9a"/>
<rect x="1909" y="303" width="2" height="1" fill="#9a9a9a"/>
<rect x="1900" y="316" width="14" height="7" fill="#9a9a9a"/>
<rect x="1899" y="328" width="15" height="1" fill="#9a9a9a"/>
<rect x="1913" y="323" width="1" height="6" fill="#9a9a9a"/>
<rect x="1903" y="325" width="2" height="1" fill="#9a9a9a"/>
<rect x="1906" y="325" width="2" height="1" fill="#9a9a9a"/>
<rect x="1909" y="325" width="2" height="1" fill="#9a9a9a"/>
<rect x="1900" y="336" width="14" height="7" fill="#9a9a9a"/>
<rect x="1899" y="348" width="15" height="1" fill="#9a9a9a"/>
<rect x="1913" y="343" width="1" height="6" fill="#9a9a9a"/>
<rect x="1903" y="345" width="2" height="1" fill="#9a9a9a"/>
<rect x="1906" y="345" width="2" height="1" fill="#9a9a9a"/>
<rect x="1909" y="345" width="2" height="1" fill="#9a9a9a"/>
<rect x="1900" y="357" width="14" height="7" fill="#9a9a9a"/>
<rect x="1899" y="369" width="15" height="1" fill="#9a9a9a"/>
<rect x="1913" y="364" width="1" height="6" fill="#9a9a9a"/>
<rect x="1903" y="366" width="2" height="1" fill="#9a9a9a"/>
<rect x="1906" y="366" width="2" height="1" fill="#9a9a9a"/>
<rect x="1909" y="366" width="2" height="1" fill="#9a9a9a"/>
<rect x="1900" y="378" width="14" height="7" fill="#9a9a9a"/>
<rect x="1899" y="390" width="15" height="1" fill="#9a9a9a"/>
<rect x="1913" y="385" width="1" height="6" fill="#9a9a9a"/>
<rect x="1903" y="387" width="2" height="1" fill="#9a9a9a"/>
<rect x="1906" y="387" width="2" height="1" fill="#9a9a9a"/>
<rect x="1909" y="387" width="2" height="1" fill="#9a9a9a"/>
<rect x="1900" y="398" width="14" height="7" fill="#9a9a9a"/>
<rect x="1899" y="410" width="15" height="1" fill="#9a9a9a"/>
<rect x="1913" y="405" width="1" height="6" fill="#9a9a9a"/>
<rect x="1903" y="407" width="2" height="1" fill="#9a9a9a"/>
<rect x="1906" y="407" width="2" height="1" fill="#9a9a9a"/>
<rect x="1909" y="407" width="2" height="1" fill="#9a9a9a"/>
<rect x="1899" y="419" width="15" height="1" fill="#9a9a9a"/>
<rect x="1899" y="428" width="15" height="1" fill="#9a9a9a"/>
<rect x="1899" y="419" width="1" height="10" fill="#9a9a9a"/>
<rect x="1913" y="419" width="1" height="10" fill="#9a9a9a"/>
<path d="M1900,426 L1904,422 L1907,425 L1910,421" stroke="#9a9a9a" stroke-width="1" fill="none" />
<rect x="1899" y="432" width="15" height="1" fill="#9a9a9a"/>
<rect x="1900" y="430" width="2" height="1" fill="#9a9a9a"/>
<rect x="1903" y="430" width="2" height="1" fill="#9a9a9a"/>
<rect x="1906" y="430" width="2" height="1" fill="#9a9a9a"/>
<rect x="1909" y="430" width="2" height="1" fill="#9a9a9a"/>
<rect x="1899" y="440" width="15" height="1" fill="#9a9a9a"/>
<rect x="1899" y="449" width="15" height="1" fill="#9a9a9a"/>
<rect x="1899" y="440" width="1" height="10" fill="#9a9a9a"/>
<rect x="1913" y="440" width="1" height="10" fill="#9a9a9a"/>
<path d="M1900,447 L1904,443 L1907,446 L1910,442" stroke="#9a9a9a" stroke-width="1" fill="none" />
<rect x="1899" y="453" width="15" height="1" fill="#9a9a9a"/>
<rect x="1900" y="451" width="2" height="1" fill="#9a9a9a"/>
<rect x="1903" y="451" width="2" height="1" fill="#9a9a9a"/>
<rect x="1906" y="451" width="2" height="1" fill="#9a9a9a"/>
<rect x="1909" y="451" width="2" height="1" fill="#9a9a9a"/>
<rect x="1899" y="462" width="15" height="1" fill="#9a9a9a"/>
<rect x="1899" y="471" width="15" height="1" fill="#9a9a9a"/>
<rect x="1899" y="462" width="1" height="10" fill="#9a9a9a"/>
<rect x="1913" y="462" width="1" height="10" fill="#9a9a9a"/>
<path d="M1900,469 L1904,465 L1907,468 L1910,464" stroke="#9a9a9a" stroke-width="1" fill="none" />
<rect x="1899" y="475" width="15" height="1" fill="#9a9a9a"/>
<rect x="1900" y="473" width="2" height="1" fill="#9a9a9a"/>
<rect x="1903" y="473" width="2" height="1" fill="#9a9a9a"/>
<rect x="1906" y="473" width="2" height="1" fill="#9a9a9a"/>
<rect x="1909" y="473" width="2" height="1" fill="#9a9a9a"/>
<rect x="1899" y="482" width="15" height="1" fill="#9a9a9a"/>
<rect x="1899" y="491" width="15" height="1" fill="#9a9a9a"/>
<rect x="1899" y="482" width="1" height="10" fill="#9a9a9a"/>
<rect x="1913" y="482" width="1" height="10" fill="#9a9a9a"/>
<path d="M1900,489 L1904,485 L1907,488 L1910,484" stroke="#9a9a9a" stroke-width="1" fill="none" />
<rect x="1899" y="495" width="15" height="1" fill="#9a9a9a"/>
<rect x="1900" y="493" width="2" height="1" fill="#9a9a9a"/>
<rect x="1903" y="493" width="2" height="1" fill="#9a9a9a"/>
<rect x="1906" y="493" width="2" height="1" fill="#9a9a9a"/>
<rect x="1909" y="493" width="2" height="1" fill="#9a9a9a"/>
<rect x="1899" y="503" width="15" height="1" fill="#9a9a9a"/>
<rect x="1899" y="512" width="15" height="1" fill="#9a9a9a"/>
<rect x="1899" y="503" width="1" height="10" fill="#9a9a9a"/>
<rect x="1913" y="503" width="1" height="10" fill="#9a9a9a"/>
<path d="M1900,510 L1904,506 L1907,509 L1910,505" stroke="#9a9a9a" stroke-width="1" fill="none" />
<rect x="1899" y="516" width="15" height="1" fill="#9a9a9a"/>
<rect x="1900" y="514" width="2" height="1" fill="#9a9a9a"/>
<rect x="1903" y="514" width="2" height="1" fill="#9a9a9a"/>
<rect x="1906" y="514" width="2" height="1" fill="#9a9a9a"/>
<rect x="1909" y="514" width="2" height="1" fill="#9a9a9a"/>
<rect x="1897" y="524" width="21" height="1" fill="#a0a0a0"/>
<rect x="1897" y="525" width="21" height="1" fill="#ffffff"/>
<rect x="1897" y="529" width="20" height="1" fill="#a0a0a0"/>
<rect x="1897" y="561" width="20" height="1" fill="#a0a0a0"/>
<rect x="1897" y="529" width="1" height="33" fill="#a0a0a0"/>
<rect x="1916" y="529" width="1" height="33" fill="#a0a0a0"/>
<rect x="1897" y="529" width="20" height="1" fill="#ffffff"/>
<rect x="1897" y="529" width="1" height="33" fill="#ffffff"/>
<rect x="1901" y="533" width="12" height="13" fill="#9a9a9a"/>
<rect x="1900" y="534" width="1" height="1" fill="#9a9a9a"/>
<rect x="1913" y="534" width="1" height="1" fill="#9a9a9a"/>
<rect x="1900" y="537" width="1" height="1" fill="#9a9a9a"/>
<rect x="1913" y="537" width="1" height="1" fill="#9a9a9a"/>
<rect x="1900" y="540" width="1" height="1" fill="#9a9a9a"/>
<rect x="1913" y="540" width="1" height="1" fill="#9a9a9a"/>
<rect x="1900" y="543" width="1" height="1" fill="#9a9a9a"/>
<rect x="1913" y="543" width="1" height="1" fill="#9a9a9a"/>
<path d="M1905,552 L1909,555.5 L1905,559 Z" fill="#9a9a9a" />
<rect x="1897" y="565" width="21" height="1" fill="#a0a0a0"/>
<rect x="1897" y="566" width="21" height="1" fill="#ffffff"/>
<path d="M1900,578 L1907,573 L1913,580 L1906,584 Z" stroke="#9a9a9a" stroke-width="1.2" fill="none" />
<rect x="1903" y="585" width="10" height="1" fill="#9a9a9a"/>
<path d="M1905,592 L1909,595.5 L1905,599 Z" fill="#9a9a9a" />
<rect x="1897" y="606" width="21" height="1" fill="#a0a0a0"/>
<rect x="1897" y="607" width="21" height="1" fill="#ffffff"/>
<circle cx="1903" cy="626" r="3" stroke="#9a9a9a" stroke-width="2" fill="none"/>
<path d="M1905,623 L1911,614 L1913,616 M1909,617 L1911,619 M1906,625 L1916,625" stroke="#9a9a9a" stroke-width="1.5" fill="none" />
<rect x="170" y="211" width="884" height="1" fill="#ff5252"/>
<rect x="170" y="211" width="1" height="163" fill="#ff5252"/>
<rect x="1053" y="211" width="1" height="67" fill="#ff5252"/>
<rect x="170" y="373" width="99" height="1" fill="#ff5252"/>
<rect x="268" y="349" width="1" height="25" fill="#ff5252"/>
<rect x="268" y="349" width="18" height="1" fill="#ff5252"/>
<rect x="324" y="349" width="34" height="1" fill="#ff5252"/>
<rect x="340" y="349" width="1" height="90" fill="#ff5252"/>
<rect x="195" y="373" width="1" height="17" fill="#ff5252"/>
<rect x="195" y="389" width="146" height="1" fill="#ff5252"/>
<path d="M193.5,374 L195.5,371 L197.5,374 L195.5,375 Z" fill="#ff5252" />
<path d="M338.5,390 L340.5,387 L342.5,390 L340.5,391 Z" fill="#ff5252" />
<path d="M338.5,350 L340.5,347 L342.5,350 L340.5,351 Z" fill="#ff5252" />
<rect x="187" y="292" width="49" height="33" fill="#c4dcc4"/>
<rect x="187" y="292" width="49" height="1" fill="#000000"/>
<rect x="187" y="324" width="49" height="1" fill="#000000"/>
<rect x="187" y="292" width="1" height="33" fill="#000000"/>
<rect x="235" y="292" width="1" height="33" fill="#000000"/>
<rect x="189" y="296" width="13" height="10" fill="#ffffff"/>
<rect x="190" y="297" width="11" height="8" fill="#c4c4c4"/>
<rect x="204" y="296" width="13" height="10" fill="#ffffff"/>
<rect x="205" y="297" width="11" height="8" fill="#c4c4c4"/>
<rect x="220" y="296" width="13" height="10" fill="#ffffff"/>
<rect x="221" y="297" width="11" height="8" fill="#c4c4c4"/>
<path d="M190.5,303 L193,299.5 L195.5,303 L198,299.5 L200.5,303" stroke="#000000" stroke-width="0.9" fill="none" />
<path d="M205.5,302 Q208,298 211,301 Q213.5,304 216.5,300" stroke="#000000" stroke-width="0.9" fill="none" />
<path d="M221.5,303.5 L223.5,303.5 L223.5,299.5 L226.5,299.5 L226.5,303.5 L228.5,303.5 L228.5,299.5 L231.5,299.5" stroke="#000000" stroke-width="0.9" fill="none" />
<text x="195" y="314" font-family="Liberation Sans" font-size="9" fill="#000000" font-weight="normal" text-anchor="middle" >+</text>
<text x="211" y="314" font-family="Liberation Sans" font-size="7" fill="#303030" font-weight="normal" text-anchor="middle" >COM</text>
<rect x="225" y="311" width="5" height="1" fill="#000000"/>
<circle cx="195.5" cy="319.5" r="2" stroke="#000000" stroke-width="1" fill="#c4dcc4"/>
<circle cx="211.5" cy="319.5" r="2" stroke="#000000" stroke-width="1" fill="#c4dcc4"/>
<circle cx="227.5" cy="319.5" r="2" stroke="#000000" stroke-width="1" fill="#c4dcc4"/>
<rect x="195" y="322" width="1" height="52" fill="#000000"/>
<rect x="211" y="322" width="1" height="255" fill="#000000"/>
<rect x="227" y="322" width="1" height="12" fill="#000000"/>
<text x="210" y="286" font-family="Liberation Serif" font-size="11" fill="#000000" font-weight="bold" text-anchor="middle" textLength="28" lengthAdjust="spacingAndGlyphs" >XFG1</text>
<rect x="285" y="349" width="16" height="1" fill="#000000"/>
<rect x="300" y="341" width="2" height="17" fill="#000000"/>
<rect x="305" y="341" width="2" height="17" fill="#000000"/>
<rect x="307" y="349" width="18" height="1" fill="#000000"/>
<text x="303" y="334.5" font-family="Liberation Sans" font-size="12" fill="#000000" font-weight="bold" text-anchor="middle" >C1</text>
<text x="303" y="370.5" font-family="Liberation Sans" font-size="12" fill="#000000" font-weight="bold" text-anchor="middle" >0μ47F</text>
<rect x="357" y="349" width="9" height="1" fill="#000000"/>
<path d="M365,349.5 L368.43,345.5 L371.86,353.5 L375.29,345.5 L378.71,353.5 L382.14,345.5 L385.57,353.5 L389,349.5" stroke="#000000" stroke-width="1" fill="none" />
<rect x="389" y="349" width="9" height="1" fill="#000000"/>
<text x="376" y="338.5" font-family="Liberation Sans" font-size="12" fill="#000000" font-weight="bold" text-anchor="middle" >R1</text>
<text x="376" y="365.5" font-family="Liberation Sans" font-size="12" fill="#000000" font-weight="bold" text-anchor="middle" >1kΩ</text>
<rect x="397" y="349" width="114" height="1" fill="#ff0000"/>
<path d="M411.5,350 L413.5,347 L415.5,350 L413.5,351 Z" fill="#ff0000" />
<rect x="413" y="349" width="1" height="75" fill="#ff0000"/>
<rect x="413" y="423" width="1" height="18" fill="#000000"/>
<rect x="405" y="440" width="18" height="2" fill="#000000"/>
<rect x="405" y="444" width="18" height="2" fill="#000000"/>
<rect x="413" y="446" width="1" height="131" fill="#000000"/>
<text x="424" y="414.5" font-family="Liberation Sans" font-size="12" fill="#000000" font-weight="bold" text-anchor="start" >C2</text>
<text x="424" y="430.5" font-family="Liberation Sans" font-size="12" fill="#000000" font-weight="bold" text-anchor="start" >820pF</text>
<rect x="340" y="438" width="1" height="10" fill="#000000"/>
<path d="M340.5,447 L344.5,450.29 L336.5,453.57 L344.5,456.86 L336.5,460.14 L344.5,463.43 L336.5,466.71 L340.5,470" stroke="#000000" stroke-width="1" fill="none" />
<rect x="340" y="470" width="1" height="107" fill="#000000"/>
<text x="347" y="447" font-family="Liberation Sans" font-size="12" fill="#000000" font-weight="bold" text-anchor="start" >R2</text>
<text x="347" y="462.5" font-family="Liberation Sans" font-size="12" fill="#000000" font-weight="bold" text-anchor="start" >47kΩ</text>
<rect x="478" y="381" width="33" height="1" fill="#ff0000"/>
<rect x="478" y="381" width="1" height="91" fill="#ff0000"/>
<rect x="478" y="471" width="1" height="13" fill="#000000"/>
<path d="M478.5,483 L482.5,485.86 L474.5,488.71 L482.5,491.57 L474.5,494.43 L482.5,497.29 L474.5,500.14 L478.5,503" stroke="#000000" stroke-width="1" fill="none" />
<rect x="478" y="503" width="1" height="74" fill="#000000"/>
<rect x="502" y="381" width="1" height="220" fill="#ff0000"/>
<path d="M500.5,382 L502.5,379 L504.5,382 L502.5,383 Z" fill="#ff0000" />
<text x="469" y="471" font-family="Liberation Sans" font-size="12" fill="#000000" font-weight="bold" text-anchor="end" >R3</text>
<text x="467" y="487.5" font-family="Liberation Sans" font-size="12" fill="#000000" font-weight="bold" text-anchor="end" >1kΩ</text>
<rect x="211" y="576" width="1216" height="1" fill="#000000"/>
<path d="M338.5,577 L340.5,574 L342.5,577 L340.5,578 Z" fill="#000000" />
<path d="M411.5,577 L413.5,574 L415.5,577 L413.5,578 Z" fill="#000000" />
<path d="M476.5,577 L478.5,574 L480.5,577 L478.5,578 Z" fill="#000000" />
<path d="M719.5,577 L721.5,574 L723.5,577 L721.5,578 Z" fill="#000000" />
<path d="M752.5,577 L754.5,574 L756.5,577 L754.5,578 Z" fill="#000000" />
<path d="M784.5,577 L786.5,574 L788.5,577 L786.5,578 Z" fill="#000000" />
<path d="M1019.5,577 L1021.5,574 L1023.5,577 L1021.5,578 Z" fill="#000000" />
<path d="M1157.5,577 L1159.5,574 L1161.5,577 L1159.5,578 Z" fill="#000000" />
<path d="M1254.5,577 L1256.5,574 L1258.5,577 L1256.5,578 Z" fill="#000000" />
<path d="M527.5,333.5 L527.5,397.5 L591.5,365.5 Z" stroke="#0000ff" stroke-width="1.2" fill="none" />
<rect x="511" y="349" width="17" height="1" fill="#0000ff"/>
<rect x="511" y="381" width="17" height="1" fill="#0000ff"/>
<rect x="592" y="365" width="17" height="1" fill="#0000ff"/>
<rect x="529" y="349" width="7" height="1" fill="#0000ff"/>
<rect x="532" y="346" width="1" height="7" fill="#0000ff"/>
<rect x="529" y="381" width="7" height="1" fill="#0000ff"/>
<rect x="543" y="317" width="1" height="25" fill="#0000ff"/>
<rect x="559" y="317" width="1" height="33" fill="#0000ff"/>
<rect x="575" y="317" width="1" height="41" fill="#0000ff"/>
<rect x="543" y="389" width="1" height="27" fill="#0000ff"/>
<rect x="559" y="381" width="1" height="35" fill="#0000ff"/>
<rect x="559" y="316" width="17" height="1" fill="#ff0000"/>
<rect x="543" y="252" width="1" height="65" fill="#ff0000"/>
<rect x="543" y="252" width="90" height="1" fill="#ff0000"/>
<rect x="543" y="415" width="1" height="49" fill="#ff0000"/>
<rect x="543" y="463" width="1" height="8" fill="#000000"/>
<text x="513" y="347" font-family="Liberation Sans" font-size="7" fill="#4060ff" font-weight="normal" text-anchor="middle" >3</text>
<text x="513" y="379" font-family="Liberation Sans" font-size="7" fill="#4060ff" font-weight="normal" text-anchor="middle" >2</text>
<text x="598" y="363" font-family="Liberation Sans" font-size="7" fill="#4060ff" font-weight="normal" text-anchor="middle" >6</text>
<text x="540" y="327" font-family="Liberation Sans" font-size="7" fill="#4060ff" font-weight="normal" text-anchor="middle" transform="rotate(-90 540 327)">7</text>
<text x="556" y="327" font-family="Liberation Sans" font-size="7" fill="#4060ff" font-weight="normal" text-anchor="middle" transform="rotate(-90 556 327)">1</text>
<text x="572" y="327" font-family="Liberation Sans" font-size="7" fill="#4060ff" font-weight="normal" text-anchor="middle" transform="rotate(-90 572 327)">5</text>
<text x="540" y="412" font-family="Liberation Sans" font-size="7" fill="#4060ff" font-weight="normal" text-anchor="middle" transform="rotate(-90 540 412)">4</text>
<text x="556" y="412" font-family="Liberation Sans" font-size="7" fill="#4060ff" font-weight="normal" text-anchor="middle" transform="rotate(-90 556 412)">8</text>
<text x="594" y="327" font-family="Liberation Sans" font-size="12" fill="#0000ff" font-weight="bold" text-anchor="start" >U10</text>
<text x="594" y="345" font-family="Liberation Sans" font-size="12" fill="#0000ff" font-weight="bold" text-anchor="start" textLength="51" lengthAdjust="spacingAndGlyphs" >CA3130T</text>
<rect x="632" y="252" width="1" height="9" fill="#000000"/>
<rect x="622" y="260" width="22" height="1" fill="#000000"/>
<rect x="627" y="265" width="11" height="1" fill="#000000"/>
<rect x="622" y="270" width="22" height="1" fill="#000000"/>
<rect x="627" y="275" width="11" height="1" fill="#000000"/>
<rect x="632" y="275" width="1" height="18" fill="#000000"/>
<path d="M624,292.5 L641,292.5 L632.5,301 Z" stroke="#000000" stroke-width="1" fill="none" />
<text x="645" y="257" font-family="Liberation Sans" font-size="12" fill="#000000" font-weight="bold" text-anchor="start" >V2</text>
<text x="645" y="273" font-family="Liberation Sans" font-size="12" fill="#000000" font-weight="bold" text-anchor="start" >15V</text>
<text x="633" y="317" font-family="Liberation Sans" font-size="12" fill="#000000" font-weight="bold" text-anchor="middle" >GND</text>
<rect x="533" y="470" width="22" height="1" fill="#000000"/>
<rect x="538" y="475" width="11" height="1" fill="#000000"/>
<rect x="533" y="480" width="22" height="1" fill="#000000"/>
<rect x="538" y="485" width="11" height="1" fill="#000000"/>
<rect x="543" y="485" width="1" height="27" fill="#000000"/>
<path d="M535,511.5 L552,511.5 L543.5,520 Z" stroke="#000000" stroke-width="1" fill="none" />
<text x="556" y="467.5" font-family="Liberation Sans" font-size="12" fill="#000000" font-weight="bold" text-anchor="start" >V3</text>
<text x="556" y="482" font-family="Liberation Sans" font-size="12" fill="#000000" font-weight="bold" text-anchor="start" >22V</text>
<text x="544" y="536" font-family="Liberation Sans" font-size="12" fill="#000000" font-weight="bold" text-anchor="middle" >GND</text>
<rect x="608" y="365" width="67" height="1" fill="#ff0000"/>
<path d="M654.5,366 L656.5,363 L658.5,366 L656.5,367 Z" fill="#ff0000" />
<rect x="674" y="365" width="17" height="1" fill="#000000"/>
<rect x="690" y="357" width="2" height="17" fill="#000000"/>
<rect x="695" y="357" width="2" height="17" fill="#000000"/>
<rect x="697" y="365" width="18" height="1" fill="#000000"/>
<rect x="714" y="365" width="8" height="1" fill="#ff0000"/>
<rect x="721" y="365" width="1" height="50" fill="#ff0000"/>
<text x="692.5" y="350.5" font-family="Liberation Sans" font-size="12" fill="#000000" font-weight="bold" text-anchor="middle" >C4</text>
<text x="692.5" y="386.5" font-family="Liberation Sans" font-size="12" fill="#000000" font-weight="bold" text-anchor="middle" >47pF</text>
<rect x="656" y="365" width="1" height="50" fill="#ff0000"/>
<rect x="656" y="414" width="18" height="1" fill="#ff0000"/>
<rect x="673" y="414" width="9" height="1" fill="#000000"/>
<path d="M681,414.5 L684.43,410.5 L687.86,418.5 L691.29,410.5 L694.71,418.5 L698.14,410.5 L701.57,418.5 L705,414.5" stroke="#000000" stroke-width="1" fill="none" />
<rect x="705" y="414" width="9" height="1" fill="#000000"/>
<rect x="713" y="414" width="98" height="1" fill="#ff0000"/>
<path d="M719.5,415 L721.5,412 L723.5,415 L721.5,416 Z" fill="#ff0000" />
<text x="692" y="403" font-family="Liberation Sans" font-size="12" fill="#000000" font-weight="bold" text-anchor="middle" >R5</text>
<text x="692.5" y="430" font-family="Liberation Sans" font-size="12" fill="#000000" font-weight="bold" text-anchor="middle" >10kΩ</text>
<rect x="721" y="414" width="1" height="18" fill="#ff0000"/>
<rect x="721" y="431" width="1" height="9" fill="#000000"/>
<path d="M721.5,439 L725.5,442.29 L717.5,445.57 L725.5,448.86 L717.5,452.14 L725.5,455.43 L717.5,458.71 L721.5,462" stroke="#000000" stroke-width="1" fill="none" />
<rect x="721" y="462" width="1" height="9" fill="#000000"/>
<rect x="721" y="470" width="1" height="9" fill="#ff0000"/>
<text x="711" y="455" font-family="Liberation Sans" font-size="12" fill="#000000" font-weight="bold" text-anchor="end" >R6</text>
<text x="716" y="473.5" font-family="Liberation Sans" font-size="12" fill="#000000" font-weight="bold" text-anchor="end" >220Ω</text>
<rect x="721" y="478" width="66" height="1" fill="#ff0000"/>
<path d="M719.5,479 L721.5,476 L723.5,479 L721.5,480 Z" fill="#ff0000" />
<path d="M752.5,479 L754.5,476 L756.5,479 L754.5,480 Z" fill="#ff0000" />
<rect x="754" y="478" width="1" height="9" fill="#ff0000"/>
<rect x="754" y="486" width="1" height="19" fill="#000000"/>
<rect x="745" y="504" width="19" height="2" fill="#000000"/>
<rect x="745" y="508" width="19" height="2" fill="#000000"/>
<rect x="754" y="510" width="1" height="67" fill="#000000"/>
<text x="756" y="455" font-family="Liberation Sans" font-size="12" fill="#000000" font-weight="bold" text-anchor="start" >C5</text>
<text x="756" y="471" font-family="Liberation Sans" font-size="12" fill="#000000" font-weight="bold" text-anchor="start" >4700pF</text>
<rect x="721" y="478" width="1" height="35" fill="#ff0000"/>
<rect x="721" y="512" width="1" height="48" fill="#0000ff"/>
<rect x="721" y="559" width="1" height="18" fill="#000000"/>
<path d="M714,529 L729,529 L721.5,540 Z" fill="#0000ff" />
<rect x="714" y="540" width="16" height="1" fill="#0000ff"/>
<text x="677" y="532" font-family="Liberation Sans" font-size="12" fill="#0000ff" font-weight="bold" text-anchor="start" >D1</text>
<text x="674" y="547" font-family="Liberation Sans" font-size="12" fill="#0000ff" font-weight="bold" text-anchor="start" >1N4148</text>
<rect x="786" y="478" width="1" height="43" fill="#ff0000"/>
<rect x="786" y="520" width="1" height="48" fill="#0000ff"/>
<rect x="786" y="567" width="1" height="10" fill="#000000"/>
<path d="M779,550 L794,550 L786.5,539 Z" fill="#0000ff" />
<rect x="779" y="538" width="16" height="1" fill="#0000ff"/>
<text x="796" y="532" font-family="Liberation Sans" font-size="12" fill="#0000ff" font-weight="bold" text-anchor="start" >D2</text>
<text x="796" y="546.5" font-family="Liberation Sans" font-size="12" fill="#0000ff" font-weight="bold" text-anchor="start" >1N4148</text>
<path d="M826.5,405.5 L826.5,454.5 L875,430.5 Z" stroke="#0000ff" stroke-width="1.2" fill="none" />
<rect x="811" y="414" width="16" height="1" fill="#0000ff"/>
<rect x="811" y="446" width="16" height="1" fill="#0000ff"/>
<rect x="829" y="416" width="7" height="1" fill="#0000ff"/>
<rect x="832" y="413" width="1" height="7" fill="#0000ff"/>
<rect x="830" y="443" width="7" height="1" fill="#0000ff"/>
<rect x="810" y="446" width="1" height="131" fill="#000000"/>
<rect x="843" y="389" width="1" height="26" fill="#0000ff"/>
<rect x="843" y="447" width="1" height="25" fill="#0000ff"/>
<rect x="843" y="268" width="1" height="122" fill="#ff0000"/>
<rect x="843" y="268" width="584" height="1" fill="#ff0000"/>
<rect x="843" y="471" width="1" height="25" fill="#ff0000"/>
<rect x="843" y="495" width="600" height="1" fill="#ff0000"/>
<rect x="875" y="430" width="17" height="1" fill="#0000ff"/>
<text x="813" y="411" font-family="Liberation Sans" font-size="7" fill="#4060ff" font-weight="normal" text-anchor="middle" >1</text>
<text x="813" y="443" font-family="Liberation Sans" font-size="7" fill="#4060ff" font-weight="normal" text-anchor="middle" >2</text>
<text x="881" y="427" font-family="Liberation Sans" font-size="7" fill="#4060ff" font-weight="normal" text-anchor="middle" >4</text>
<text x="840" y="399" font-family="Liberation Sans" font-size="7" fill="#4060ff" font-weight="normal" text-anchor="middle" transform="rotate(-90 840 399)">5</text>
<text x="840" y="468" font-family="Liberation Sans" font-size="7" fill="#4060ff" font-weight="normal" text-anchor="middle" transform="rotate(-90 840 468)">3</text>
<text x="877" y="399.5" font-family="Liberation Sans" font-size="12" fill="#0000ff" font-weight="bold" text-anchor="start" >U9</text>
<text x="877" y="466.5" font-family="Liberation Sans" font-size="12" fill="#0000ff" font-weight="bold" text-anchor="start" >LM1875T</text>
<rect x="892" y="430" width="80" height="1" fill="#ff0000"/>
<path d="M946.5,431 L948.5,428 L950.5,431 L948.5,432 Z" fill="#ff0000" />
<path d="M1019.5,431 L1021.5,428 L1023.5,431 L1021.5,432 Z" fill="#ff0000" />
<rect x="948" y="422" width="74" height="1" fill="#ff0000"/>
<rect x="948" y="422" width="1" height="9" fill="#ff0000"/>
<rect x="1021" y="422" width="1" height="9" fill="#ff0000"/>
<rect x="971" y="430" width="11" height="1" fill="#000000"/>
<rect x="1003" y="430" width="11" height="1" fill="#000000"/>
<path d="M981,430.5 A2.75,3 0 0 1 986.5,430.5 A2.75,3 0 0 1 992,430.5 A2.75,3 0 0 1 997.5,430.5 A2.75,3 0 0 1 1003,430.5" stroke="#000000" stroke-width="1" fill="none" />
<rect x="1013" y="430" width="308" height="1" fill="#ff0000"/>
<text x="992" y="420.5" font-family="Liberation Sans" font-size="12" fill="#000000" font-weight="bold" text-anchor="middle" >L2</text>
<text x="992" y="442" font-family="Liberation Sans" font-size="12" fill="#000000" font-weight="bold" text-anchor="middle" >3μH</text>
<rect x="948" y="430" width="1" height="171" fill="#ff0000"/>
<rect x="502" y="600" width="83" height="1" fill="#ff0000"/>
<rect x="584" y="600" width="9" height="1" fill="#000000"/>
<path d="M592,600.5 L595.43,596.5 L598.86,604.5 L602.29,596.5 L605.71,604.5 L609.14,596.5 L612.57,604.5 L616,600.5" stroke="#000000" stroke-width="1" fill="none" />
<rect x="616" y="600" width="9" height="1" fill="#000000"/>
<rect x="624" y="600" width="325" height="1" fill="#ff0000"/>
<path d="M565.5,601 L567.5,598 L569.5,601 L567.5,602 Z" fill="#ff0000" />
<path d="M638.5,601 L640.5,598 L642.5,601 L640.5,602 Z" fill="#ff0000" />
<rect x="567" y="600" width="1" height="49" fill="#ff0000"/>
<rect x="640" y="600" width="1" height="49" fill="#ff0000"/>
<rect x="567" y="648" width="18" height="1" fill="#ff0000"/>
<rect x="584" y="648" width="17" height="1" fill="#000000"/>
<rect x="600" y="640" width="2" height="17" fill="#000000"/>
<rect x="605" y="640" width="2" height="17" fill="#000000"/>
<rect x="607" y="648" width="18" height="1" fill="#000000"/>
<rect x="624" y="648" width="17" height="1" fill="#ff0000"/>
<text x="603" y="590" font-family="Liberation Sans" font-size="12" fill="#000000" font-weight="bold" text-anchor="middle" >R4</text>
<text x="603" y="616" font-family="Liberation Sans" font-size="12" fill="#000000" font-weight="bold" text-anchor="middle" >9k1Ω</text>
<text x="603" y="634" font-family="Liberation Sans" font-size="12" fill="#000000" font-weight="bold" text-anchor="middle" >C3</text>
<text x="603" y="670" font-family="Liberation Sans" font-size="12" fill="#000000" font-weight="bold" text-anchor="middle" >22pF</text>
<rect x="1021" y="430" width="1" height="91" fill="#ff0000"/>
<rect x="1021" y="520" width="1" height="12" fill="#000000"/>
<path d="M1021.5,531 L1025.5,533.86 L1017.5,536.71 L1025.5,539.57 L1017.5,542.43 L1025.5,545.29 L1017.5,548.14 L1021.5,551" stroke="#000000" stroke-width="1" fill="none" />
<rect x="1021" y="551" width="1" height="26" fill="#000000"/>
<text x="1039" y="527.5" font-family="Liberation Sans" font-size="12" fill="#000000" font-weight="bold" text-anchor="start" >N1</text>
<text x="1027" y="544" font-family="Liberation Sans" font-size="12" fill="#000000" font-weight="bold" text-anchor="start" >4Ω</text>
<path d="M1100.5,431 L1102.5,428 L1104.5,431 L1102.5,432 Z" fill="#ff0000" />
<path d="M1157.5,431 L1159.5,428 L1161.5,431 L1159.5,432 Z" fill="#ff0000" />
<path d="M1237.5,431 L1239.5,428 L1241.5,431 L1239.5,432 Z" fill="#ff0000" />
<rect x="1159" y="430" width="1" height="10" fill="#ff0000"/>
<rect x="1159" y="439" width="1" height="17" fill="#000000"/>
<rect x="1150" y="455" width="19" height="2" fill="#000000"/>
<rect x="1150" y="459" width="19" height="2" fill="#000000"/>
<rect x="1159" y="461" width="1" height="17" fill="#000000"/>
<rect x="1159" y="477" width="1" height="35" fill="#ff0000"/>
<rect x="1159" y="511" width="1" height="11" fill="#000000"/>
<path d="M1159.5,521 L1163.5,524.14 L1155.5,527.29 L1163.5,530.43 L1155.5,533.57 L1163.5,536.71 L1155.5,539.86 L1159.5,543" stroke="#000000" stroke-width="1" fill="none" />
<rect x="1159" y="543" width="1" height="34" fill="#000000"/>
<text x="1169" y="447" font-family="Liberation Sans" font-size="12" fill="#000000" font-weight="bold" text-anchor="start" >C1001</text>
<text x="1169" y="463" font-family="Liberation Sans" font-size="12" fill="#000000" font-weight="bold" text-anchor="start" >0μ1F</text>
<text x="1165" y="519.5" font-family="Liberation Sans" font-size="12" fill="#000000" font-weight="bold" text-anchor="start" >R1001</text>
<text x="1165" y="536" font-family="Liberation Sans" font-size="12" fill="#000000" font-weight="bold" text-anchor="start" >10Ω</text>
<rect x="1426" y="268" width="1" height="25" fill="#ff0000"/>
<rect x="1426" y="285" width="1" height="8" fill="#000000"/>
<rect x="1416" y="292" width="22" height="1" fill="#000000"/>
<rect x="1421" y="297" width="11" height="1" fill="#000000"/>
<rect x="1416" y="302" width="22" height="1" fill="#000000"/>
<rect x="1421" y="307" width="11" height="1" fill="#000000"/>
<rect x="1426" y="307" width="1" height="270" fill="#000000"/>
<path d="M1424.5,382 L1426.5,379 L1428.5,382 L1426.5,383 Z" fill="#000000" />
<rect x="1385" y="381" width="58" height="1" fill="#000000"/>
<rect x="1385" y="381" width="1" height="25" fill="#000000"/>
<path d="M1377,405.5 L1394,405.5 L1385.5,414 Z" stroke="#000000" stroke-width="1" fill="none" />
<rect x="1442" y="381" width="1" height="74" fill="#000000"/>
<rect x="1432" y="454" width="22" height="1" fill="#000000"/>
<rect x="1437" y="459" width="11" height="1" fill="#000000"/>
<rect x="1432" y="464" width="22" height="1" fill="#000000"/>
<rect x="1437" y="469" width="11" height="1" fill="#000000"/>
<rect x="1442" y="469" width="1" height="10" fill="#000000"/>
<rect x="1442" y="478" width="1" height="18" fill="#ff0000"/>
<text x="1438" y="289" font-family="Liberation Sans" font-size="12" fill="#000000" font-weight="bold" text-anchor="start" >V1</text>
<text x="1438" y="305" font-family="Liberation Sans" font-size="12" fill="#000000" font-weight="bold" text-anchor="start" >22V</text>
<text x="1386" y="430.5" font-family="Liberation Sans" font-size="12" fill="#000000" font-weight="bold" text-anchor="middle" >GND</text>
<text x="1455" y="451" font-family="Liberation Sans" font-size="12" fill="#000000" font-weight="bold" text-anchor="start" >V4</text>
<text x="1455" y="465.5" font-family="Liberation Sans" font-size="12" fill="#000000" font-weight="bold" text-anchor="start" >22V</text>
<rect x="1110" y="292" width="40" height="65" fill="#c4dcc4"/>
<rect x="1110" y="292" width="40" height="1" fill="#000000"/>
<rect x="1110" y="356" width="40" height="1" fill="#000000"/>
<rect x="1110" y="292" width="1" height="65" fill="#000000"/>
<rect x="1149" y="292" width="1" height="65" fill="#000000"/>
<text x="1137" y="317" font-family="Liberation Sans" font-size="6" fill="#606060" font-weight="normal" text-anchor="middle" >Ext Trig</text>
<circle cx="1142.5" cy="324.5" r="2.5" stroke="#000000" stroke-width="1" fill="none"/>
<path d="M1142.5,324.5 L1160,324.5 M1142.5,327 L1142.5,333.5 L1160,333.5" stroke="#000000" stroke-width="1" fill="none" />
<text x="1122" y="287" font-family="Liberation Sans" font-size="12" fill="#000000" font-weight="bold" text-anchor="middle" >2</text>
<rect x="1053" y="365" width="1" height="41" fill="#ffff00"/>
<rect x="1053" y="405" width="147" height="1" fill="#ffff00"/>
<rect x="1199" y="357" width="1" height="49" fill="#ffff00"/>
<rect x="1078" y="365" width="1" height="25" fill="#000000"/>
<rect x="1078" y="389" width="179" height="1" fill="#000000"/>
<rect x="1110" y="356" width="1" height="34" fill="#000000"/>
<rect x="1102" y="365" width="1" height="66" fill="#ff0000"/>
<path d="M1108.5,390 L1110.5,387 L1112.5,390 L1110.5,391 Z" fill="#000000" />
<path d="M1213.5,390 L1215.5,387 L1217.5,390 L1215.5,391 Z" fill="#000000" />
<path d="M1254.5,390 L1256.5,387 L1258.5,390 L1256.5,391 Z" fill="#000000" />
<rect x="1191" y="300" width="74" height="49" fill="#c4dcc4"/>
<rect x="1191" y="300" width="74" height="1" fill="#000000"/>
<rect x="1191" y="348" width="74" height="1" fill="#000000"/>
<rect x="1191" y="300" width="1" height="49" fill="#000000"/>
<rect x="1264" y="300" width="1" height="49" fill="#000000"/>
<rect x="1196" y="303" width="49" height="19" fill="#ffffff"/>
<rect x="1197" y="304" width="47" height="17" fill="#c0c0c0"/>
<path d="M1200,307.5 L1220,307.5 L1238,320.5 M1222.5,305 L1222.5,322" stroke="#000000" stroke-width="1" fill="none" />
<text x="1207" y="332" font-family="Liberation Sans" font-size="10" fill="#202020" font-weight="normal" text-anchor="middle" >IN</text>
<text x="1248" y="332" font-family="Liberation Sans" font-size="10" fill="#202020" font-weight="normal" text-anchor="middle" >OUT</text>
<text x="1199" y="339" font-family="Liberation Sans" font-size="9" fill="#000000" font-weight="normal" text-anchor="middle" >+</text>
<rect x="1213" y="336" width="6" height="1" fill="#000000"/>
<text x="1239" y="339" font-family="Liberation Sans" font-size="9" fill="#000000" font-weight="normal" text-anchor="middle" >+</text>
<rect x="1253" y="336" width="6" height="1" fill="#000000"/>
<circle cx="1199.5" cy="343.5" r="2" stroke="#000000" stroke-width="1" fill="#c4dcc4"/>
<circle cx="1215.5" cy="343.5" r="2" stroke="#000000" stroke-width="1" fill="#c4dcc4"/>
<circle cx="1239.5" cy="343.5" r="2" stroke="#000000" stroke-width="1" fill="#c4dcc4"/>
<circle cx="1255.5" cy="343.5" r="2" stroke="#000000" stroke-width="1" fill="#c4dcc4"/>
<rect x="1199" y="346" width="1" height="12" fill="#000000"/>
<rect x="1215" y="346" width="1" height="44" fill="#000000"/>
<rect x="1239" y="346" width="1" height="12" fill="#000000"/>
<rect x="1239" y="357" width="1" height="74" fill="#ff0000"/>
<rect x="1256" y="346" width="1" height="231" fill="#000000"/>
<text x="1226.5" y="294.5" font-family="Liberation Serif" font-size="11" fill="#000000" font-weight="bold" text-anchor="middle" textLength="28" lengthAdjust="spacingAndGlyphs" >XBP2</text>
<rect x="1280" y="381" width="49" height="24" fill="#c4dcc4"/>
<rect x="1280" y="381" width="49" height="1" fill="#000000"/>
<rect x="1280" y="404" width="49" height="1" fill="#000000"/>
<rect x="1280" y="381" width="1" height="24" fill="#000000"/>
<rect x="1328" y="381" width="1" height="24" fill="#000000"/>
<rect x="1284" y="384" width="39" height="11" fill="#ffffff"/>
<rect x="1285" y="385" width="37" height="9" fill="#c0c0c0"/>
<text x="1304" y="392.5" font-family="Liberation Sans" font-size="7" fill="#202020" font-weight="normal" text-anchor="middle" >THD</text>
<rect x="1286" y="397" width="6" height="6" fill="#c4c4c4"/>
<rect x="1286" y="397" width="6" height="1" fill="#000000"/>
<rect x="1286" y="402" width="6" height="1" fill="#000000"/>
<rect x="1286" y="397" width="1" height="6" fill="#000000"/>
<rect x="1291" y="397" width="1" height="6" fill="#000000"/>
<rect x="1294" y="397" width="6" height="6" fill="#c4c4c4"/>
<rect x="1294" y="397" width="6" height="1" fill="#000000"/>
<rect x="1294" y="402" width="6" height="1" fill="#000000"/>
<rect x="1294" y="397" width="1" height="6" fill="#000000"/>
<rect x="1299" y="397" width="1" height="6" fill="#000000"/>
<rect x="1302" y="397" width="6" height="6" fill="#c4c4c4"/>
<rect x="1302" y="397" width="6" height="1" fill="#000000"/>
<rect x="1302" y="402" width="6" height="1" fill="#000000"/>
<rect x="1302" y="397" width="1" height="6" fill="#000000"/>
<rect x="1307" y="397" width="1" height="6" fill="#000000"/>
<circle cx="1321" cy="400.5" r="2" stroke="#000000" stroke-width="1" fill="#c4dcc4"/>
<rect x="1321" y="403" width="1" height="13" fill="#000000"/>
<rect x="1321" y="415" width="1" height="16" fill="#ff0000"/>
<text x="1304" y="375.5" font-family="Liberation Serif" font-size="11" fill="#000000" font-weight="bold" text-anchor="middle" textLength="28" lengthAdjust="spacingAndGlyphs" >XDA2</text>
<rect x="1006" y="277" width="114" height="88" fill="#ffffc4"/>
<rect x="1006" y="277" width="115" height="1" fill="#5a7fc0"/>
<rect x="1006" y="365" width="115" height="1" fill="#5a7fc0"/>
<rect x="1006" y="277" width="1" height="89" fill="#5a7fc0"/>
<rect x="1120" y="277" width="1" height="89" fill="#5a7fc0"/>
<text x="1013" y="293.5" font-family="Liberation Sans" font-size="14" fill="#000000" font-weight="normal" text-anchor="start" >V: -3.62 V</text>
<text x="1013" y="309.5" font-family="Liberation Sans" font-size="14" fill="#000000" font-weight="normal" text-anchor="start" >V(p-p): 10.2 V</text>
<text x="1013" y="325.5" font-family="Liberation Sans" font-size="14" fill="#000000" font-weight="normal" text-anchor="start" >V(rms): 3.62 V</text>
<text x="1013" y="341.5" font-family="Liberation Sans" font-size="14" fill="#000000" font-weight="normal" text-anchor="start" >V(dc): 80.8 mV</text>
<text x="1013" y="357.5" font-family="Liberation Sans" font-size="14" fill="#000000" font-weight="normal" text-anchor="start" >V(freq): 20.0 k...</text>
<rect x="1003" y="274" width="5" height="5" fill="#0000ff"/>
<rect x="1061" y="274" width="5" height="5" fill="#0000ff"/>
<rect x="1119" y="274" width="5" height="5" fill="#0000ff"/>
<rect x="1003" y="319" width="5" height="5" fill="#0000ff"/>
<rect x="1119" y="319" width="5" height="5" fill="#0000ff"/>
<rect x="1003" y="365" width="5" height="5" fill="#0000ff"/>
<rect x="1061" y="365" width="5" height="5" fill="#0000ff"/>
<rect x="1119" y="365" width="5" height="5" fill="#0000ff"/>
<path d="M1063.5,369 L1064,403 L1065,404 L1065.5,409" stroke="#3a6ab0" stroke-width="1" fill="none" />
<path d="M1053.5,430.5 L1053.5,428 L1058,422.5 L1060.5,424.5 L1055,430 Z" fill="#a8d8a0" stroke="#3a6ab0" stroke-width="0.8"/>
<path d="M1057.5,420 L1062.5,425" stroke="#3a6ab0" stroke-width="1.6" fill="none" />
<circle cx="1065.5" cy="416.5" r="7" stroke="#3a6ab0" stroke-width="1" fill="#ffffff"/>
<text x="1065.5" y="420.5" font-family="Liberation Sans" font-size="9.5" fill="#4a7a4a" font-weight="bold" text-anchor="middle" >V</text>
<path d="M1021.5,535 L1029.5,527.5" stroke="#a8d8a0" stroke-width="3.2" fill="none" />
<circle cx="1033.5" cy="521.5" r="7" stroke="#6a9a6a" stroke-width="1" fill="#ffffff"/>
<text x="1033.5" y="525.5" font-family="Liberation Sans" font-size="9.5" fill="#5a8a5a" font-weight="bold" text-anchor="middle" >W</text>
<path d="M1033,528 L1030.5,584" stroke="#8aa0e0" stroke-width="1" fill="none" />
<rect x="1029.5" y="583.5" width="141" height="42" rx="2" fill="#ffffc4" stroke="#8aa8e0" stroke-width="1"/>
<text x="1036" y="599.5" font-family="Liberation Sans" font-size="14" fill="#000" font-weight="normal" text-anchor="start" >P: 3.87 W</text>
<text x="1036" y="615" font-family="Liberation Sans" font-size="14" fill="#000" font-weight="normal" text-anchor="start" >P(avg): 3.28 W</text>
<defs><filter id="sh" x="-20%" y="-20%" width="140%" height="140%"><feGaussianBlur stdDeviation="6"/></filter></defs>
<rect x="105" y="724" width="226" height="239" fill="#000" opacity="0.3" filter="url(#sh)"/>
<rect x="105" y="722" width="225" height="238" fill="#f0f0f0"/>
<rect x="105" y="722" width="225" height="31" fill="#ffffff"/>
<rect x="105" y="722" width="225" height="1" fill="#a6a6a6"/>
<rect x="105" y="959" width="225" height="1" fill="#a6a6a6"/>
<rect x="105" y="722" width="1" height="238" fill="#a6a6a6"/>
<rect x="329" y="722" width="1" height="238" fill="#a6a6a6"/>
<text x="114" y="742" font-family="Liberation Sans" font-size="12" fill="#8c8c8c" font-weight="normal" text-anchor="start" textLength="177" lengthAdjust="spacingAndGlyphs" >Функциональный генератор-X...</text>
<path d="M309,732 L319,742 M319,732 L309,742" stroke="#606060" stroke-width="1" fill="none" />
<rect x="109" y="761" width="216" height="1" fill="#dcdcdc"/>
<rect x="109" y="915" width="216" height="1" fill="#dcdcdc"/>
<rect x="109" y="761" width="1" height="155" fill="#dcdcdc"/>
<rect x="324" y="761" width="1" height="155" fill="#dcdcdc"/>
<rect x="109" y="797" width="216" height="1" fill="#dcdcdc"/>
<rect x="114" y="755" width="80" height="12" fill="#f0f0f0"/>
<text x="118" y="765.5" font-family="Liberation Sans" font-size="12" fill="#000" font-weight="normal" text-anchor="start" textLength="74" lengthAdjust="spacingAndGlyphs" >Форма сигнала</text>
<rect x="120" y="771" width="63" height="16" fill="#cce4f7"/>
<rect x="120" y="771" width="63" height="1" fill="#0078d7"/>
<rect x="120" y="786" width="63" height="1" fill="#0078d7"/>
<rect x="120" y="771" width="1" height="16" fill="#0078d7"/>
<rect x="182" y="771" width="1" height="16" fill="#0078d7"/>
<rect x="186" y="771" width="64" height="16" fill="#e1e1e1"/>
<rect x="186" y="771" width="64" height="1" fill="#adadad"/>
<rect x="186" y="786" width="64" height="1" fill="#adadad"/>
<rect x="186" y="771" width="1" height="16" fill="#adadad"/>
<rect x="249" y="771" width="1" height="16" fill="#adadad"/>
<rect x="254" y="771" width="64" height="16" fill="#e1e1e1"/>
<rect x="254" y="771" width="64" height="1" fill="#adadad"/>
<rect x="254" y="786" width="64" height="1" fill="#adadad"/>
<rect x="254" y="771" width="1" height="16" fill="#adadad"/>
<rect x="317" y="771" width="1" height="16" fill="#adadad"/>
<path d="M129,779.5 Q139,774 149.5,779.5 Q160,785 169,779.5" stroke="#000" stroke-width="1" fill="none" />
<path d="M195,781.5 L206,776.5 L217,781.5 L228,776.5 L240,781.5" stroke="#000" stroke-width="1" fill="none" />
<path d="M264,782.5 L272,782.5 L272,776.5 L281,776.5 L281,782.5 L290,782.5 L290,776.5 L299,776.5 L299,782.5 L308,782.5" stroke="#000" stroke-width="1" fill="none" />
<rect x="114" y="791" width="104" height="12" fill="#f0f0f0"/>
<text x="118" y="801.5" font-family="Liberation Sans" font-size="12" fill="#000" font-weight="normal" text-anchor="start" textLength="99" lengthAdjust="spacingAndGlyphs" >Параметры сигнала</text>
<text x="121" y="820" font-family="Liberation Sans" font-size="12" fill="#000" font-weight="normal" text-anchor="start" textLength="41.6" lengthAdjust="spacingAndGlyphs" >Частота</text>
<rect x="202" y="806" width="82" height="20" fill="#ffffff"/>
<rect x="202" y="806" width="82" height="1" fill="#5a5a5a"/>
<rect x="202" y="825" width="82" height="1" fill="#5a5a5a"/>
<rect x="202" y="806" width="1" height="20" fill="#5a5a5a"/>
<rect x="283" y="806" width="1" height="20" fill="#5a5a5a"/>
<rect x="284" y="806" width="36" height="20" fill="#ffffff"/>
<rect x="284" y="806" width="36" height="1" fill="#5a5a5a"/>
<rect x="284" y="825" width="36" height="1" fill="#5a5a5a"/>
<rect x="284" y="806" width="1" height="20" fill="#5a5a5a"/>
<rect x="319" y="806" width="1" height="20" fill="#5a5a5a"/>
<text x="208" y="820" font-family="Liberation Sans" font-size="12" fill="#000" font-weight="normal" text-anchor="start" >20</text>
<text x="288" y="819" font-family="Liberation Sans" font-size="12" fill="#000" font-weight="normal" text-anchor="start" >kHz</text>
<text x="121" y="840" font-family="Liberation Sans" font-size="12" fill="#000" font-weight="normal" text-anchor="start" textLength="72.2" lengthAdjust="spacingAndGlyphs" >Длительность</text>
<rect x="202" y="826" width="82" height="20" fill="#f0f0f0"/>
<rect x="202" y="826" width="82" height="1" fill="#cccccc"/>
<rect x="202" y="845" width="82" height="1" fill="#cccccc"/>
<rect x="202" y="826" width="1" height="20" fill="#cccccc"/>
<rect x="283" y="826" width="1" height="20" fill="#cccccc"/>
<rect x="284" y="826" width="36" height="20" fill="#f0f0f0"/>
<rect x="284" y="826" width="36" height="1" fill="#cccccc"/>
<rect x="284" y="845" width="36" height="1" fill="#cccccc"/>
<rect x="284" y="826" width="1" height="20" fill="#cccccc"/>
<rect x="319" y="826" width="1" height="20" fill="#cccccc"/>
<text x="208" y="840" font-family="Liberation Sans" font-size="12" fill="#8c8c8c" font-weight="normal" text-anchor="start" >50</text>
<text x="298" y="840" font-family="Liberation Sans" font-size="12" fill="#8c8c8c" font-weight="normal" text-anchor="middle" >%</text>
<text x="121" y="860" font-family="Liberation Sans" font-size="12" fill="#000" font-weight="normal" text-anchor="start" textLength="55.6" lengthAdjust="spacingAndGlyphs" >Амплитуда</text>
<rect x="202" y="846" width="82" height="19" fill="#ffffff"/>
<rect x="202" y="846" width="82" height="1" fill="#5a5a5a"/>
<rect x="202" y="864" width="82" height="1" fill="#5a5a5a"/>
<rect x="202" y="846" width="1" height="19" fill="#5a5a5a"/>
<rect x="283" y="846" width="1" height="19" fill="#5a5a5a"/>
<rect x="284" y="846" width="36" height="19" fill="#ffffff"/>
<rect x="284" y="846" width="36" height="1" fill="#5a5a5a"/>
<rect x="284" y="864" width="36" height="1" fill="#5a5a5a"/>
<rect x="284" y="846" width="1" height="19" fill="#5a5a5a"/>
<rect x="319" y="846" width="1" height="19" fill="#5a5a5a"/>
<text x="208" y="860" font-family="Liberation Sans" font-size="12" fill="#000" font-weight="normal" text-anchor="start" >510</text>
<text x="288" y="859" font-family="Liberation Sans" font-size="12" fill="#000" font-weight="normal" text-anchor="start" >mVp</text>
<text x="121" y="879" font-family="Liberation Sans" font-size="12" fill="#000" font-weight="normal" text-anchor="start" textLength="51.6" lengthAdjust="spacingAndGlyphs" >Смещение</text>
<rect x="202" y="865" width="82" height="20" fill="#ffffff"/>
<rect x="202" y="865" width="82" height="1" fill="#5a5a5a"/>
<rect x="202" y="884" width="82" height="1" fill="#5a5a5a"/>
<rect x="202" y="865" width="1" height="20" fill="#5a5a5a"/>
<rect x="283" y="865" width="1" height="20" fill="#5a5a5a"/>
<rect x="284" y="865" width="36" height="20" fill="#ffffff"/>
<rect x="284" y="865" width="36" height="1" fill="#5a5a5a"/>
<rect x="284" y="884" width="36" height="1" fill="#5a5a5a"/>
<rect x="284" y="865" width="1" height="20" fill="#5a5a5a"/>
<rect x="319" y="865" width="1" height="20" fill="#5a5a5a"/>
<text x="208" y="879" font-family="Liberation Sans" font-size="12" fill="#000" font-weight="normal" text-anchor="start" >0</text>
<text x="298" y="879" font-family="Liberation Sans" font-size="12" fill="#000" font-weight="normal" text-anchor="middle" >V</text>
<rect x="150" y="890" width="130" height="22" fill="#cccccc"/>
<rect x="150" y="890" width="130" height="1" fill="#bfbfbf"/>
<rect x="150" y="911" width="130" height="1" fill="#bfbfbf"/>
<rect x="150" y="890" width="1" height="22" fill="#bfbfbf"/>
<rect x="279" y="890" width="1" height="22" fill="#bfbfbf"/>
<text x="215.0" y="905.0" font-family="Liberation Sans" font-size="12" fill="#838383" font-weight="normal" text-anchor="middle" textLength="61" lengthAdjust="spacingAndGlyphs" >Фронт/Спад</text>
<text x="204.5" y="933" font-family="Liberation Sans" font-size="12" fill="#000" font-weight="normal" text-anchor="middle" textLength="35" lengthAdjust="spacingAndGlyphs" >Общий</text>
<text x="132" y="938" font-family="Liberation Sans" font-size="13" fill="#000" font-weight="normal" text-anchor="middle" >+</text>
<rect x="297" y="934" width="8" height="1" fill="#000"/>
<circle cx="131" cy="943" r="5.5" stroke="#c8c8c8" stroke-width="1" fill="#ffffff"/>
<circle cx="131" cy="943" r="3" stroke="none" stroke-width="1" fill="#c8c8c8"/>
<circle cx="202" cy="943" r="5.5" stroke="#c8c8c8" stroke-width="1" fill="#ffffff"/>
<circle cx="202" cy="943" r="3" stroke="none" stroke-width="1" fill="#c8c8c8"/>
<circle cx="300" cy="945" r="6" stroke="#c8c8c8" stroke-width="1" fill="#ffffff"/>
<rect x="326" y="950" width="2" height="2" fill="#b0b0b0"/>
<rect x="326" y="953" width="2" height="2" fill="#b0b0b0"/>
<rect x="323" y="953" width="2" height="2" fill="#b0b0b0"/>
<rect x="326" y="956" width="2" height="2" fill="#b0b0b0"/>
<rect x="323" y="956" width="2" height="2" fill="#b0b0b0"/>
<rect x="320" y="956" width="2" height="2" fill="#b0b0b0"/>
<rect x="345" y="728" width="316" height="221" fill="#000" opacity="0.3" filter="url(#sh)"/>
<rect x="345" y="726" width="315" height="220" fill="#f0f0f0"/>
<rect x="345" y="726" width="315" height="31" fill="#ffffff"/>
<rect x="345" y="726" width="315" height="1" fill="#707070"/>
<rect x="345" y="945" width="315" height="1" fill="#707070"/>
<rect x="345" y="726" width="1" height="220" fill="#707070"/>
<rect x="659" y="726" width="1" height="220" fill="#707070"/>
<text x="354" y="745" font-family="Liberation Sans" font-size="12" fill="#000000" font-weight="normal" text-anchor="start" textLength="236" lengthAdjust="spacingAndGlyphs" >Измеритель нелинейных искажений-XDA2</text>
<path d="M639,736 L649,746 M649,736 L639,746" stroke="#000" stroke-width="1" fill="none" />
<text x="501" y="769.5" font-family="Liberation Sans" font-size="12" fill="#000" font-weight="normal" text-anchor="middle" textLength="186" lengthAdjust="spacingAndGlyphs" >Общие нелинейные искажения(THD)</text>
<rect x="348" y="774" width="310" height="35" fill="#ffffff"/>
<rect x="348" y="808" width="310" height="1" fill="#6a6a6a"/>
<rect x="657" y="774" width="1" height="35" fill="#6a6a6a"/>
<rect x="350" y="775" width="305" height="1" fill="#9a9a9a"/>
<rect x="351" y="776" width="304" height="1" fill="#606060"/>
<rect x="350" y="775" width="1" height="30" fill="#9a9a9a"/>
<rect x="351" y="776" width="1" height="29" fill="#606060"/>
<rect x="352" y="777" width="301" height="27" fill="#000000"/>
<text x="511.5" y="794.5" font-family="Liberation Sans" font-size="16" fill="#ffffff" font-weight="normal" text-anchor="middle" textLength="58" lengthAdjust="spacingAndGlyphs" >0.000 %</text>
<rect x="353" y="827" width="42" height="25" fill="#cce4f7"/>
<rect x="353" y="827" width="42" height="1" fill="#0078d7"/>
<rect x="353" y="851" width="42" height="1" fill="#0078d7"/>
<rect x="353" y="827" width="1" height="25" fill="#0078d7"/>
<rect x="394" y="827" width="1" height="25" fill="#0078d7"/>
<text x="374.0" y="843.5" font-family="Liberation Sans" font-size="12" fill="#000" font-weight="normal" text-anchor="middle" textLength="30" lengthAdjust="spacingAndGlyphs" >Старт</text>
<rect x="353" y="860" width="42" height="25" fill="#e1e1e1"/>
<rect x="353" y="860" width="42" height="1" fill="#adadad"/>
<rect x="353" y="884" width="42" height="1" fill="#adadad"/>
<rect x="353" y="860" width="1" height="25" fill="#adadad"/>
<rect x="394" y="860" width="1" height="25" fill="#adadad"/>
<text x="374.0" y="876.5" font-family="Liberation Sans" font-size="12" fill="#000" font-weight="normal" text-anchor="middle" textLength="25" lengthAdjust="spacingAndGlyphs" >Стоп</text>
<rect x="403" y="813" width="255" height="1" fill="#dcdcdc"/>
<rect x="403" y="898" width="255" height="1" fill="#dcdcdc"/>
<rect x="403" y="813" width="1" height="86" fill="#dcdcdc"/>
<rect x="657" y="813" width="1" height="86" fill="#dcdcdc"/>
<rect x="404" y="814" width="253" height="1" fill="#ffffff"/>
<rect x="404" y="814" width="1" height="84" fill="#ffffff"/>
<text x="507" y="837.5" font-family="Liberation Sans" font-size="12" fill="#000" font-weight="normal" text-anchor="end" textLength="96" lengthAdjust="spacingAndGlyphs" >Основная частота.</text>
<rect x="517" y="826" width="94" height="18" fill="#f0f0f0"/>
<rect x="517" y="826" width="94" height="1" fill="#cccccc"/>
<rect x="517" y="843" width="94" height="1" fill="#cccccc"/>
<rect x="517" y="826" width="1" height="18" fill="#cccccc"/>
<rect x="610" y="826" width="1" height="18" fill="#cccccc"/>
<rect x="612" y="826" width="36" height="18" fill="#f0f0f0"/>
<rect x="612" y="826" width="36" height="1" fill="#cccccc"/>
<rect x="612" y="843" width="36" height="1" fill="#cccccc"/>
<rect x="612" y="826" width="1" height="18" fill="#cccccc"/>
<rect x="647" y="826" width="1" height="18" fill="#cccccc"/>
<text x="563.5" y="839.5" font-family="Liberation Sans" font-size="12" fill="#8c8c8c" font-weight="normal" text-anchor="middle" >20</text>
<text x="616" y="838.5" font-family="Liberation Sans" font-size="12" fill="#8c8c8c" font-weight="normal" text-anchor="start" >kHz</text>
<text x="507" y="870" font-family="Liberation Sans" font-size="12" fill="#000" font-weight="normal" text-anchor="end" textLength="64" lengthAdjust="spacingAndGlyphs" >Разрешение.</text>
<rect x="517" y="854" width="131" height="21" fill="#cccccc"/>
<text x="521" y="869" font-family="Liberation Sans" font-size="12" fill="#8c8c8c" font-weight="normal" text-anchor="start" textLength="26" lengthAdjust="spacingAndGlyphs" >2 kHz</text>
<path d="M634,862 L638,866 L642,862" stroke="#a0a0a0" stroke-width="1" fill="none" />
<rect x="517" y="877" width="131" height="19" fill="#f0f0f0"/>
<rect x="517" y="877" width="131" height="1" fill="#a0a0a0"/>
<rect x="517" y="877" width="1" height="19" fill="#a0a0a0"/>
<rect x="517" y="895" width="131" height="1" fill="#ffffff"/>
<rect x="647" y="877" width="1" height="19" fill="#ffffff"/>
<text x="582" y="890" font-family="Liberation Sans" font-size="12" fill="#000" font-weight="normal" text-anchor="middle" textLength="26" lengthAdjust="spacingAndGlyphs" >2 kHz</text>
<rect x="351" y="910" width="188" height="1" fill="#dcdcdc"/>
<rect x="351" y="941" width="188" height="1" fill="#dcdcdc"/>
<rect x="351" y="910" width="1" height="32" fill="#dcdcdc"/>
<rect x="538" y="910" width="1" height="32" fill="#dcdcdc"/>
<rect x="356" y="904" width="66" height="12" fill="#f0f0f0"/>
<text x="359" y="914.5" font-family="Liberation Sans" font-size="12" fill="#000" font-weight="normal" text-anchor="start" textLength="60" lengthAdjust="spacingAndGlyphs" >Управление</text>
<rect x="359" y="918" width="56" height="19" fill="#cce4f7"/>
<rect x="359" y="918" width="56" height="1" fill="#0078d7"/>
<rect x="359" y="936" width="56" height="1" fill="#0078d7"/>
<rect x="359" y="918" width="1" height="19" fill="#0078d7"/>
<rect x="414" y="918" width="1" height="19" fill="#0078d7"/>
<text x="387.0" y="931.5" font-family="Liberation Sans" font-size="12" fill="#000" font-weight="normal" text-anchor="middle" >THD</text>
<rect x="419" y="918" width="55" height="19" fill="#e1e1e1"/>
<rect x="419" y="918" width="55" height="1" fill="#adadad"/>
<rect x="419" y="936" width="55" height="1" fill="#adadad"/>
<rect x="419" y="918" width="1" height="19" fill="#adadad"/>
<rect x="473" y="918" width="1" height="19" fill="#adadad"/>
<text x="446.5" y="931.5" font-family="Liberation Sans" font-size="12" fill="#000" font-weight="normal" text-anchor="middle" textLength="31" lengthAdjust="spacingAndGlyphs" >SINAD</text>
<rect x="479" y="918" width="56" height="19" fill="#cccccc"/>
<rect x="479" y="918" width="56" height="1" fill="#bfbfbf"/>
<rect x="479" y="936" width="56" height="1" fill="#bfbfbf"/>
<rect x="479" y="918" width="1" height="19" fill="#bfbfbf"/>
<rect x="534" y="918" width="1" height="19" fill="#bfbfbf"/>
<text x="507.0" y="931.5" font-family="Liberation Sans" font-size="12" fill="#838383" font-weight="normal" text-anchor="middle" textLength="29" lengthAdjust="spacingAndGlyphs" >Уст...</text>
<rect x="538" y="910" width="67" height="1" fill="#dcdcdc"/>
<rect x="538" y="941" width="67" height="1" fill="#dcdcdc"/>
<rect x="538" y="910" width="1" height="32" fill="#dcdcdc"/>
<rect x="604" y="910" width="1" height="32" fill="#dcdcdc"/>
<rect x="544" y="904" width="37" height="12" fill="#f0f0f0"/>
<text x="547" y="914.5" font-family="Liberation Sans" font-size="12" fill="#000" font-weight="normal" text-anchor="start" textLength="31" lengthAdjust="spacingAndGlyphs" >Экран</text>
<rect x="542" y="918" width="26" height="19" fill="#cce4f7"/>
<rect x="542" y="918" width="26" height="1" fill="#0078d7"/>
<rect x="542" y="936" width="26" height="1" fill="#0078d7"/>
<rect x="542" y="918" width="1" height="19" fill="#0078d7"/>
<rect x="567" y="918" width="1" height="19" fill="#0078d7"/>
<text x="555.0" y="931.5" font-family="Liberation Sans" font-size="12" fill="#000" font-weight="normal" text-anchor="middle" >%</text>
<rect x="572" y="918" width="26" height="19" fill="#e1e1e1"/>
<rect x="572" y="918" width="26" height="1" fill="#adadad"/>
<rect x="572" y="936" width="26" height="1" fill="#adadad"/>
<rect x="572" y="918" width="1" height="19" fill="#adadad"/>
<rect x="597" y="918" width="1" height="19" fill="#adadad"/>
<text x="585.0" y="931.5" font-family="Liberation Sans" font-size="12" fill="#000" font-weight="normal" text-anchor="middle" >dB</text>
<text x="618" y="936" font-family="Liberation Sans" font-size="12" fill="#000" font-weight="normal" text-anchor="start" textLength="12" lengthAdjust="spacingAndGlyphs" >Вх</text>
<circle cx="638" cy="931" r="5" stroke="#c8c8c8" stroke-width="1" fill="#ffffff"/>
<circle cx="638" cy="931" r="3" stroke="none" stroke-width="1" fill="#c8c8c8"/>
<rect x="655" y="936" width="2" height="2" fill="#b0b0b0"/>
<rect x="655" y="939" width="2" height="2" fill="#b0b0b0"/>
<rect x="652" y="939" width="2" height="2" fill="#b0b0b0"/>
<rect x="655" y="942" width="2" height="2" fill="#b0b0b0"/>
<rect x="652" y="942" width="2" height="2" fill="#b0b0b0"/>
<rect x="649" y="942" width="2" height="2" fill="#b0b0b0"/>
<rect x="670" y="730" width="984" height="228" fill="#000" opacity="0.3" filter="url(#sh)"/>
<rect x="670" y="728" width="983" height="227" fill="#f0f0f0"/>
<rect x="670" y="728" width="983" height="30" fill="#ffffff"/>
<rect x="670" y="728" width="983" height="1" fill="#a6a6a6"/>
<rect x="670" y="954" width="983" height="1" fill="#a6a6a6"/>
<rect x="670" y="728" width="1" height="227" fill="#a6a6a6"/>
<rect x="1652" y="728" width="1" height="227" fill="#a6a6a6"/>
<text x="679" y="747" font-family="Liberation Sans" font-size="12" fill="#8c8c8c" font-weight="normal" text-anchor="start" textLength="107" lengthAdjust="spacingAndGlyphs" >Плоттер Боде-XBP2</text>
<path d="M1632,738 L1642,748 M1642,738 L1632,748" stroke="#606060" stroke-width="1" fill="none" />
<rect x="672" y="760" width="734" height="172" fill="#ffffff"/>
<rect x="672" y="760" width="734" height="1" fill="#6a6a6a"/>
<rect x="672" y="760" width="1" height="172" fill="#6a6a6a"/>
<rect x="673" y="761" width="731" height="1" fill="#a8a8a8"/>
<rect x="673" y="761" width="1" height="169" fill="#a8a8a8"/>
<rect x="674" y="762" width="730" height="1" fill="#5a5a5a"/>
<rect x="674" y="762" width="1" height="168" fill="#5a5a5a"/>
<rect x="672" y="931" width="734" height="1" fill="#6a6a6a"/>
<rect x="1405" y="760" width="1" height="172" fill="#6a6a6a"/>
<rect x="675" y="763" width="728" height="166" fill="#000000"/>
<line x1="797.5" y1="767" x2="797.5" y2="921" stroke="#c8c8c8" stroke-width="1" stroke-dasharray="4,3"/>
<line x1="960.5" y1="767" x2="960.5" y2="921" stroke="#c8c8c8" stroke-width="1" stroke-dasharray="4,3"/>
<line x1="1122.5" y1="767" x2="1122.5" y2="921" stroke="#c8c8c8" stroke-width="1" stroke-dasharray="4,3"/>
<line x1="1285.5" y1="767" x2="1285.5" y2="921" stroke="#c8c8c8" stroke-width="1" stroke-dasharray="4,3"/>
<line x1="1399.5" y1="767" x2="1399.5" y2="921" stroke="#c8c8c8" stroke-width="1" stroke-dasharray="4,3"/>
<line x1="683" y1="767.5" x2="1400" y2="767.5" stroke="#c8c8c8" stroke-width="1" stroke-dasharray="4,3"/>
<line x1="683" y1="806.5" x2="1400" y2="806.5" stroke="#c8c8c8" stroke-width="1" stroke-dasharray="4,3"/>
<line x1="683" y1="844.5" x2="1400" y2="844.5" stroke="#c8c8c8" stroke-width="1" stroke-dasharray="4,3"/>
<line x1="683" y1="883.5" x2="1400" y2="883.5" stroke="#c8c8c8" stroke-width="1" stroke-dasharray="4,3"/>
<rect x="683" y="767" width="1" height="155" fill="#ffffff"/>
<rect x="683" y="921" width="717" height="1" fill="#ffffff"/>
<rect x="679" y="844" width="5" height="1" fill="#ffffff"/>
<path d="M684,844.5 L1106,844.5 L1140,845.5 L1181,846.3 L1217,847.2 L1258,848.9 L1285,851 L1305,853.2 L1336,857.5 L1369,861 L1386,863.5 L1398,866" stroke="#f0f000" stroke-width="1" fill="none" shape-rendering="crispEdges"/>
<rect x="1137" y="766" width="1" height="156" fill="#00d0e8"/>
<path d="M1132,764 L1142,764 L1137,769 Z" fill="#00d0e8" />
<path d="M1134.5,847.5 L1134.5,844 L1137.5,841.5 L1140.5,844 L1140.5,847.5 Z" stroke="#00d0e8" stroke-width="1" fill="none" />
<rect x="673" y="935" width="133" height="15" fill="#e1e1e1"/>
<rect x="673" y="935" width="133" height="1" fill="#adadad"/>
<rect x="673" y="949" width="133" height="1" fill="#adadad"/>
<rect x="673" y="935" width="1" height="15" fill="#adadad"/>
<rect x="805" y="935" width="1" height="15" fill="#adadad"/>
<path d="M734,942 L739,937.5 L739,940.5 L744,940.5 L744,943.5 L739,943.5 L739,946.5 Z" fill="#000" />
<rect x="809" y="935" width="229" height="15" fill="#f0f0f0"/>
<rect x="809" y="935" width="229" height="1" fill="#ffffff"/>
<rect x="808" y="934" width="1" height="17" fill="#dcdcdc"/>
<rect x="1038" y="934" width="1" height="17" fill="#dcdcdc"/>
<text x="825" y="946" font-family="Liberation Sans" font-size="12" fill="#000" font-weight="normal" text-anchor="start" textLength="54" lengthAdjust="spacingAndGlyphs" >12.293 kHz</text>
<text x="1054" y="946" font-family="Liberation Sans" font-size="12" fill="#000" font-weight="normal" text-anchor="start" textLength="53" lengthAdjust="spacingAndGlyphs" >-7.747 Deg</text>
<rect x="1269" y="935" width="136" height="15" fill="#e1e1e1"/>
<rect x="1269" y="935" width="136" height="1" fill="#adadad"/>
<rect x="1269" y="949" width="136" height="1" fill="#adadad"/>
<rect x="1269" y="935" width="1" height="15" fill="#adadad"/>
<rect x="1404" y="935" width="1" height="15" fill="#adadad"/>
<path d="M1341,942 L1336,937.5 L1336,940.5 L1331,940.5 L1331,943.5 L1336,943.5 L1336,946.5 Z" fill="#000" />
<rect x="1410" y="766" width="236" height="1" fill="#dcdcdc"/>
<rect x="1410" y="927" width="236" height="1" fill="#dcdcdc"/>
<rect x="1410" y="766" width="1" height="162" fill="#dcdcdc"/>
<rect x="1645" y="766" width="1" height="162" fill="#dcdcdc"/>
<rect x="1415" y="760" width="41" height="12" fill="#f0f0f0"/>
<text x="1418" y="770.5" font-family="Liberation Sans" font-size="12" fill="#000" font-weight="normal" text-anchor="start" textLength="35" lengthAdjust="spacingAndGlyphs" >Режим</text>
<rect x="1434" y="778" width="94" height="17" fill="#e1e1e1"/>
<rect x="1434" y="778" width="94" height="1" fill="#adadad"/>
<rect x="1434" y="794" width="94" height="1" fill="#adadad"/>
<rect x="1434" y="778" width="1" height="17" fill="#adadad"/>
<rect x="1527" y="778" width="1" height="17" fill="#adadad"/>
<text x="1481.0" y="790.5" font-family="Liberation Sans" font-size="12" fill="#000" font-weight="normal" text-anchor="middle" textLength="55" lengthAdjust="spacingAndGlyphs" >Амплитуда</text>
<rect x="1531" y="778" width="94" height="17" fill="#cce4f7"/>
<rect x="1531" y="778" width="94" height="1" fill="#0078d7"/>
<rect x="1531" y="794" width="94" height="1" fill="#0078d7"/>
<rect x="1531" y="778" width="1" height="17" fill="#0078d7"/>
<rect x="1624" y="778" width="1" height="17" fill="#0078d7"/>
<text x="1578.0" y="790.5" font-family="Liberation Sans" font-size="12" fill="#000" font-weight="normal" text-anchor="middle" textLength="25" lengthAdjust="spacingAndGlyphs" >Фаза</text>
<rect x="1410" y="808" width="236" height="1" fill="#dcdcdc"/>
<rect x="1527" y="808" width="1" height="87" fill="#dcdcdc"/>
<rect x="1410" y="894" width="236" height="1" fill="#dcdcdc"/>
<rect x="1415" y="802" width="90" height="12" fill="#f0f0f0"/>
<text x="1418" y="812.5" font-family="Liberation Sans" font-size="12" fill="#000" font-weight="normal" text-anchor="start" textLength="79" lengthAdjust="spacingAndGlyphs" >По горизонтали</text>
<rect x="1532" y="802" width="78" height="12" fill="#f0f0f0"/>
<text x="1535" y="812.5" font-family="Liberation Sans" font-size="12" fill="#000" font-weight="normal" text-anchor="start" textLength="70" lengthAdjust="spacingAndGlyphs" >По вертикали</text>
<rect x="1423" y="821" width="43" height="18" fill="#cce4f7"/>
<rect x="1423" y="821" width="43" height="1" fill="#0078d7"/>
<rect x="1423" y="838" width="43" height="1" fill="#0078d7"/>
<rect x="1423" y="821" width="1" height="18" fill="#0078d7"/>
<rect x="1465" y="821" width="1" height="18" fill="#0078d7"/>
<text x="1444.5" y="834.0" font-family="Liberation Sans" font-size="12" fill="#000" font-weight="normal" text-anchor="middle" >Log</text>
<rect x="1470" y="821" width="43" height="18" fill="#e1e1e1"/>
<rect x="1470" y="821" width="43" height="1" fill="#adadad"/>
<rect x="1470" y="838" width="43" height="1" fill="#adadad"/>
<rect x="1470" y="821" width="1" height="18" fill="#adadad"/>
<rect x="1512" y="821" width="1" height="18" fill="#adadad"/>
<text x="1491.5" y="834.0" font-family="Liberation Sans" font-size="12" fill="#000" font-weight="normal" text-anchor="middle" >Лин</text>
<rect x="1543" y="821" width="43" height="18" fill="#cccccc"/>
<rect x="1543" y="821" width="43" height="1" fill="#bfbfbf"/>
<rect x="1543" y="838" width="43" height="1" fill="#bfbfbf"/>
<rect x="1543" y="821" width="1" height="18" fill="#bfbfbf"/>
<rect x="1585" y="821" width="1" height="18" fill="#bfbfbf"/>
<text x="1564.5" y="834.0" font-family="Liberation Sans" font-size="12" fill="#838383" font-weight="normal" text-anchor="middle" >Log</text>
<rect x="1590" y="821" width="43" height="18" fill="#cce4f7"/>
<rect x="1590" y="821" width="43" height="1" fill="#0078d7"/>
<rect x="1590" y="838" width="43" height="1" fill="#0078d7"/>
<rect x="1590" y="821" width="1" height="18" fill="#0078d7"/>
<rect x="1632" y="821" width="1" height="18" fill="#0078d7"/>
<text x="1611.5" y="834.0" font-family="Liberation Sans" font-size="12" fill="#000" font-weight="normal" text-anchor="middle" >Лин</text>
<rect x="1422" y="841" width="63" height="20" fill="#ffffff"/>
<rect x="1422" y="841" width="63" height="1" fill="#5a5a5a"/>
<rect x="1422" y="860" width="63" height="1" fill="#5a5a5a"/>
<rect x="1422" y="841" width="1" height="20" fill="#5a5a5a"/>
<rect x="1484" y="841" width="1" height="20" fill="#5a5a5a"/>
<rect x="1485" y="841" width="36" height="20" fill="#ffffff"/>
<rect x="1485" y="841" width="36" height="1" fill="#5a5a5a"/>
<rect x="1485" y="860" width="36" height="1" fill="#5a5a5a"/>
<rect x="1485" y="841" width="1" height="20" fill="#5a5a5a"/>
<rect x="1520" y="841" width="1" height="20" fill="#5a5a5a"/>
<rect x="1422" y="861" width="63" height="19" fill="#ffffff"/>
<rect x="1422" y="861" width="63" height="1" fill="#5a5a5a"/>
<rect x="1422" y="879" width="63" height="1" fill="#5a5a5a"/>
<rect x="1422" y="861" width="1" height="19" fill="#5a5a5a"/>
<rect x="1484" y="861" width="1" height="19" fill="#5a5a5a"/>
<rect x="1485" y="861" width="36" height="19" fill="#ffffff"/>
<rect x="1485" y="861" width="36" height="1" fill="#5a5a5a"/>
<rect x="1485" y="879" width="36" height="1" fill="#5a5a5a"/>
<rect x="1485" y="861" width="1" height="19" fill="#5a5a5a"/>
<rect x="1520" y="861" width="1" height="19" fill="#5a5a5a"/>
<text x="1415" y="856" font-family="Liberation Sans" font-size="12" fill="#000" font-weight="normal" text-anchor="middle" >F</text>
<text x="1415" y="878" font-family="Liberation Serif" font-size="12" fill="#000" font-weight="normal" text-anchor="middle" >I</text>
<rect x="1542" y="841" width="63" height="20" fill="#ffffff"/>
<rect x="1542" y="841" width="63" height="1" fill="#5a5a5a"/>
<rect x="1542" y="860" width="63" height="1" fill="#5a5a5a"/>
<rect x="1542" y="841" width="1" height="20" fill="#5a5a5a"/>
<rect x="1604" y="841" width="1" height="20" fill="#5a5a5a"/>
<rect x="1605" y="841" width="36" height="20" fill="#ffffff"/>
<rect x="1605" y="841" width="36" height="1" fill="#5a5a5a"/>
<rect x="1605" y="860" width="36" height="1" fill="#5a5a5a"/>
<rect x="1605" y="841" width="1" height="20" fill="#5a5a5a"/>
<rect x="1640" y="841" width="1" height="20" fill="#5a5a5a"/>
<rect x="1542" y="861" width="63" height="19" fill="#ffffff"/>
<rect x="1542" y="861" width="63" height="1" fill="#5a5a5a"/>
<rect x="1542" y="879" width="63" height="1" fill="#5a5a5a"/>
<rect x="1542" y="861" width="1" height="19" fill="#5a5a5a"/>
<rect x="1604" y="861" width="1" height="19" fill="#5a5a5a"/>
<rect x="1605" y="861" width="36" height="19" fill="#ffffff"/>
<rect x="1605" y="861" width="36" height="1" fill="#5a5a5a"/>
<rect x="1605" y="879" width="36" height="1" fill="#5a5a5a"/>
<rect x="1605" y="861" width="1" height="19" fill="#5a5a5a"/>
<rect x="1640" y="861" width="1" height="19" fill="#5a5a5a"/>
<text x="1535" y="856" font-family="Liberation Sans" font-size="12" fill="#000" font-weight="normal" text-anchor="middle" >F</text>
<text x="1535" y="878" font-family="Liberation Serif" font-size="12" fill="#000" font-weight="normal" text-anchor="middle" >I</text>
<text x="1428" y="856" font-family="Liberation Sans" font-size="12" fill="#000" font-weight="normal" text-anchor="start" >500</text>
<text x="1489" y="855" font-family="Liberation Sans" font-size="12" fill="#000" font-weight="normal" text-anchor="start" >kHz</text>
<text x="1428" y="875" font-family="Liberation Sans" font-size="12" fill="#000" font-weight="normal" text-anchor="start" >20</text>
<text x="1498" y="875" font-family="Liberation Sans" font-size="12" fill="#000" font-weight="normal" text-anchor="middle" >Hz</text>
<text x="1548" y="856" font-family="Liberation Sans" font-size="12" fill="#000" font-weight="normal" text-anchor="start" >720</text>
<text x="1622" y="855" font-family="Liberation Sans" font-size="12" fill="#000" font-weight="normal" text-anchor="middle" >Deg</text>
<text x="1548" y="875" font-family="Liberation Sans" font-size="12" fill="#000" font-weight="normal" text-anchor="start" >-720</text>
<text x="1622" y="875" font-family="Liberation Sans" font-size="12" fill="#000" font-weight="normal" text-anchor="middle" >Deg</text>
<rect x="1415" y="888" width="66" height="12" fill="#f0f0f0"/>
<text x="1418" y="898.5" font-family="Liberation Sans" font-size="12" fill="#000" font-weight="normal" text-anchor="start" textLength="60" lengthAdjust="spacingAndGlyphs" >Управление</text>
<rect x="1432" y="906" width="61" height="18" fill="#e1e1e1"/>
<rect x="1432" y="906" width="61" height="1" fill="#adadad"/>
<rect x="1432" y="923" width="61" height="1" fill="#adadad"/>
<rect x="1432" y="906" width="1" height="18" fill="#adadad"/>
<rect x="1492" y="906" width="1" height="18" fill="#adadad"/>
<text x="1462.5" y="919.0" font-family="Liberation Sans" font-size="12" fill="#000" font-weight="normal" text-anchor="middle" textLength="30" lengthAdjust="spacingAndGlyphs" >Экран</text>
<rect x="1497" y="906" width="61" height="18" fill="#e1e1e1"/>
<rect x="1497" y="906" width="61" height="1" fill="#adadad"/>
<rect x="1497" y="923" width="61" height="1" fill="#adadad"/>
<rect x="1497" y="906" width="1" height="18" fill="#adadad"/>
<rect x="1557" y="906" width="1" height="18" fill="#adadad"/>
<text x="1527.5" y="919.0" font-family="Liberation Sans" font-size="12" fill="#000" font-weight="normal" text-anchor="middle" textLength="56" lengthAdjust="spacingAndGlyphs" >Сохранить</text>
<rect x="1561" y="906" width="61" height="18" fill="#e1e1e1"/>
<rect x="1561" y="906" width="61" height="1" fill="#adadad"/>
<rect x="1561" y="923" width="61" height="1" fill="#adadad"/>
<rect x="1561" y="906" width="1" height="18" fill="#adadad"/>
<rect x="1621" y="906" width="1" height="18" fill="#adadad"/>
<text x="1591.5" y="919.0" font-family="Liberation Sans" font-size="12" fill="#000" font-weight="normal" text-anchor="middle" textLength="29" lengthAdjust="spacingAndGlyphs" >Уст...</text>
<text x="1433" y="947.5" font-family="Liberation Sans" font-size="12" fill="#000" font-weight="normal" text-anchor="middle" >+</text>
<circle cx="1446" cy="943" r="5.5" stroke="#c8c8c8" stroke-width="1" fill="#ffffff"/>
<circle cx="1446" cy="943" r="3" stroke="none" stroke-width="1" fill="#c8c8c8"/>
<text x="1463" y="947.5" font-family="Liberation Sans" font-size="12" fill="#000" font-weight="normal" text-anchor="start" textLength="12.5" lengthAdjust="spacingAndGlyphs" >Вх</text>
<circle cx="1490" cy="943" r="5.5" stroke="#c8c8c8" stroke-width="1" fill="#ffffff"/>
<circle cx="1490" cy="943" r="3" stroke="none" stroke-width="1" fill="#c8c8c8"/>
<text x="1506" y="947.5" font-family="Liberation Sans" font-size="12" fill="#000" font-weight="normal" text-anchor="middle" >–</text>
<text x="1544" y="947.5" font-family="Liberation Sans" font-size="12" fill="#000" font-weight="normal" text-anchor="middle" >+</text>
<circle cx="1557" cy="943" r="5.5" stroke="#c8c8c8" stroke-width="1" fill="#ffffff"/>
<circle cx="1557" cy="943" r="3" stroke="none" stroke-width="1" fill="#c8c8c8"/>
<text x="1572" y="947.5" font-family="Liberation Sans" font-size="12" fill="#000" font-weight="normal" text-anchor="start" textLength="19.5" lengthAdjust="spacingAndGlyphs" >Вых</text>
<circle cx="1604" cy="943" r="5.5" stroke="#c8c8c8" stroke-width="1" fill="#ffffff"/>
<circle cx="1604" cy="943" r="3" stroke="none" stroke-width="1" fill="#c8c8c8"/>
<text x="1620" y="947.5" font-family="Liberation Sans" font-size="12" fill="#000" font-weight="normal" text-anchor="middle" >–</text>
<rect x="1648" y="945" width="2" height="2" fill="#b0b0b0"/>
<rect x="1648" y="948" width="2" height="2" fill="#b0b0b0"/>
<rect x="1645" y="948" width="2" height="2" fill="#b0b0b0"/>
<rect x="1648" y="951" width="2" height="2" fill="#b0b0b0"/>
<rect x="1645" y="951" width="2" height="2" fill="#b0b0b0"/>
<rect x="1642" y="951" width="2" height="2" fill="#b0b0b0"/>
<rect x="0" y="996" width="159" height="1" fill="#1a1a1a"/>
<rect x="158" y="996" width="1" height="20" fill="#1a1a1a"/>
<rect x="6" y="1017" width="151" height="1" fill="#1a1a1a"/>
<path d="M156,1017.5 L158.5,1015" stroke="#1a1a1a" stroke-width="1" fill="none" />
<rect x="3" y="997" width="1" height="18" fill="#ffffff"/>
<path d="M3.5,1014.5 L6,1017" stroke="#1a1a1a" stroke-width="1" fill="none" />
<path d="M7,1000 L18,1000 L22,1004 L22,1015 L7,1015 Z" fill="#000" />
<path d="M8,1001 L17,1001 L21,1005 L21,1014 L8,1014 Z" fill="#fff" />
<path d="M17.5,1000 L17.5,1004.5 L22,1004.5" stroke="#000" stroke-width="1" fill="none" />
<path d="M8,1003.5 L12,1003.5 M14,1003.5 L16.5,1003.5 L16.5,1009.5 L8.5,1009.5 M8.5,1003.5 L8.5,1015" stroke="#ff0000" stroke-width="1" fill="none" />
<path d="M11.5,1001.5 L11.5,1006.5 L14.5,1004 Z" stroke="#000" stroke-width="1" fill="none" />
<path d="M10.5,1010.5 L10.5,1014.5 M10.5,1012.5 L13.5,1010.5 M10.5,1012.5 L13.5,1014.5" stroke="#000" stroke-width="1" fill="none" />
<text x="27.5" y="1011.5" font-family="Liberation Sans" font-size="12" fill="#000" font-weight="normal" text-anchor="start" textLength="126" lengthAdjust="spacingAndGlyphs" >ланзар тз, кк, 2йка УН *</text>
<rect x="253" y="996" width="1" height="22" fill="#1a1a1a"/>
<rect x="162" y="1019" width="90" height="1" fill="#1a1a1a"/>
<path d="M251,1019.5 L253.5,1017" stroke="#1a1a1a" stroke-width="1" fill="none" />
<path d="M159.5,1016.5 L162,1019" stroke="#1a1a1a" stroke-width="1" fill="none" />
<path d="M163,1000 L174,1000 L178,1004 L178,1015 L163,1015 Z" fill="#000" />
<path d="M164,1001 L173,1001 L177,1005 L177,1014 L164,1014 Z" fill="#fff" />
<path d="M173.5,1000 L173.5,1004.5 L178,1004.5" stroke="#000" stroke-width="1" fill="none" />
<path d="M164,1003.5 L168,1003.5 M170,1003.5 L172.5,1003.5 L172.5,1009.5 L164.5,1009.5 M164.5,1003.5 L164.5,1015" stroke="#ff0000" stroke-width="1" fill="none" />
<path d="M167.5,1001.5 L167.5,1006.5 L170.5,1004 Z" stroke="#000" stroke-width="1" fill="none" />
<path d="M166.5,1010.5 L166.5,1014.5 M166.5,1012.5 L169.5,1010.5 M166.5,1012.5 L169.5,1014.5" stroke="#000" stroke-width="1" fill="none" />
<text x="183" y="1011.5" font-family="Liberation Sans" font-size="12" fill="#000" font-weight="normal" text-anchor="start" textLength="66" lengthAdjust="spacingAndGlyphs" >Лимит 20K *</text>
<rect x="254" y="996" width="1666" height="1" fill="#1a1a1a"/>
<rect x="1876" y="1002" width="15" height="15" fill="#ffffff"/>
<rect x="1876" y="1016" width="15" height="1" fill="#606060"/>
<rect x="1890" y="1002" width="1" height="15" fill="#606060"/>
<rect x="1879" y="1006" width="7" height="1" fill="#0000c0"/>
<rect x="1879" y="1011" width="7" height="1" fill="#0000c0"/>
<rect x="1879" y="1006" width="1" height="6" fill="#0000c0"/>
<rect x="1885" y="1006" width="1" height="6" fill="#0000c0"/>
<rect x="1882" y="1009" width="7" height="1" fill="#0000c0"/>
<rect x="1882" y="1014" width="7" height="1" fill="#0000c0"/>
<rect x="1882" y="1009" width="1" height="6" fill="#0000c0"/>
<rect x="1888" y="1009" width="1" height="6" fill="#0000c0"/>
<path d="M1885,1007 L1888,1004" stroke="#0000c0" stroke-width="1" fill="none" />
<rect x="1880" y="1019" width="40" height="1" fill="#a0a0a0"/>
<rect x="0" y="1021" width="1920" height="1" fill="#d6d6d6"/>
<text x="2.5" y="1036" font-family="Liberation Sans" font-size="12" fill="#000" font-weight="normal" text-anchor="start" textLength="377" lengthAdjust="spacingAndGlyphs" >Статический пробник: Обозначение(Пробник1); Расположение(E13)</text>
<text x="1303" y="1035" font-family="Liberation Sans" font-size="12" fill="#000" font-weight="normal" text-anchor="middle" >-</text>
<rect x="1379" y="1023" width="1" height="17" fill="#d6d6d6"/>
<rect x="1617" y="1023" width="1" height="17" fill="#d6d6d6"/>
<rect x="1855" y="1023" width="1" height="17" fill="#d6d6d6"/>
<text x="1384" y="1036" font-family="Liberation Sans" font-size="12" fill="#000" font-weight="normal" text-anchor="start" textLength="163" lengthAdjust="spacingAndGlyphs" >Лимит 20K: Моделирование...</text>
<text x="1622" y="1036" font-family="Liberation Sans" font-size="12" fill="#000" font-weight="normal" text-anchor="start" textLength="99" lengthAdjust="spacingAndGlyphs" >Время раб: 0.356 s</text>
<rect x="1860" y="1026" width="6" height="12" fill="#10e010"/>
<rect x="1860" y="1026" width="1" height="12" fill="#0a9a0a"/>
<rect x="1868" y="1026" width="6" height="12" fill="#10e010"/>
<rect x="1868" y="1026" width="1" height="12" fill="#0a9a0a"/>
<rect x="1876" y="1026" width="6" height="12" fill="#e6e6e6"/>
<rect x="1876" y="1026" width="1" height="12" fill="#b8b8b8"/>
<rect x="1884" y="1026" width="6" height="12" fill="#e6e6e6"/>
<rect x="1884" y="1026" width="1" height="12" fill="#b8b8b8"/>
<rect x="1892" y="1026" width="6" height="12" fill="#e6e6e6"/>
<rect x="1892" y="1026" width="1" height="12" fill="#b8b8b8"/>
<rect x="1900" y="1026" width="6" height="12" fill="#10e010"/>
<rect x="1900" y="1026" width="1" height="12" fill="#0a9a0a"/>
<rect x="1908" y="1026" width="6" height="12" fill="#10e010"/>
<rect x="1908" y="1026" width="1" height="12" fill="#0a9a0a"/>
<defs><linearGradient id="tbg" x1="0" y1="0" x2="1" y2="0"><stop offset="0" stop-color="#262624"/><stop offset="0.18" stop-color="#2f2d29"/><stop offset="0.35" stop-color="#2a2723"/><stop offset="0.55" stop-color="#282420"/><stop offset="0.8" stop-color="#2c2824"/><stop offset="1" stop-color="#2e2a26"/></linearGradient><radialGradient id="edge" cx="0.35" cy="0.35" r="0.8"><stop offset="0" stop-color="#5fe07a"/><stop offset="0.45" stop-color="#1aa0d8"/><stop offset="1" stop-color="#0b57b0"/></radialGradient></defs>
<rect x="0" y="1040" width="1920" height="40" fill="url(#tbg)"/>
<defs><radialGradient id="fol" cx="0.5" cy="0.5" r="0.5"><stop offset="0" stop-color="#3d4a2c" stop-opacity="0.75"/><stop offset="0.6" stop-color="#3d4a2c" stop-opacity="0.35"/><stop offset="1" stop-color="#3d4a2c" stop-opacity="0"/></radialGradient><radialGradient id="lit" cx="0.5" cy="0.5" r="0.5"><stop offset="0" stop-color="#4e463e" stop-opacity="0.7"/><stop offset="1" stop-color="#4e463e" stop-opacity="0"/></radialGradient></defs>
<defs><clipPath id="tbclip"><rect x="0" y="1040" width="1920" height="40"/></clipPath></defs><g clip-path="url(#tbclip)">
<ellipse cx="1095" cy="1068" rx="55" ry="22" fill="url(#fol)"/>
<ellipse cx="1330" cy="1064" rx="85" ry="26" fill="url(#fol)"/>
<ellipse cx="1495" cy="1072" rx="40" ry="18" fill="url(#fol)"/>
<ellipse cx="1420" cy="1075" rx="40" ry="12" fill="url(#fol)"/>
<ellipse cx="1760" cy="1062" rx="190" ry="30" fill="url(#lit)"/>
<ellipse cx="420" cy="1056" rx="220" ry="22" fill="url(#lit)"/>
</g>
<rect x="0" y="1040" width="48" height="40" fill="#1e1e1d"/>
<rect x="48" y="1040" width="288" height="40" fill="#3a3935"/>
<rect x="14" y="1050" width="10" height="10" fill="#ffffff"/>
<rect x="25" y="1050" width="10" height="10" fill="#ffffff"/>
<rect x="14" y="1061" width="10" height="10" fill="#ffffff"/>
<rect x="25" y="1061" width="10" height="10" fill="#ffffff"/>
<circle cx="70.5" cy="1057" r="6" stroke="#e0e0e0" stroke-width="1.6" fill="none"/>
<path d="M66,1062 L60,1068" stroke="#e0e0e0" stroke-width="1.8" fill="none" />
<text x="88" y="1066" font-family="Liberation Sans" font-size="16" fill="#b8b8b8" font-weight="normal" text-anchor="start" textLength="43" lengthAdjust="spacingAndGlyphs" >Поиск</text>
<path d="M288,1048 Q290,1056 298,1058 Q290,1060 288,1068 Q286,1060 278,1058 Q286,1056 288,1048 Z" fill="#f5b800" />
<path d="M309,1058 Q310,1063 314,1064 Q310,1065 309,1070 Q308,1065 304,1064 Q308,1063 309,1058 Z" fill="#f5c020" />
<path d="M270,1067 Q271,1070 273,1070.5 Q271,1071 270,1074 Q269,1071 266,1070.5 Q269,1070 270,1067 Z" fill="#3aa0f0" />
<circle cx="304.5" cy="1052" r="1.8" stroke="none" stroke-width="1" fill="#f06030"/>
<circle cx="323" cy="1071.5" r="1.8" stroke="none" stroke-width="1" fill="#80c040"/>
<rect x="353" y="1052" width="11" height="1" fill="#ffffff"/>
<rect x="353" y="1066" width="11" height="1" fill="#ffffff"/>
<rect x="353" y="1052" width="1" height="15" fill="#ffffff"/>
<rect x="363" y="1052" width="1" height="15" fill="#ffffff"/>
<rect x="351" y="1050" width="15" height="1" fill="#ffffff"/>
<rect x="351" y="1068" width="15" height="1" fill="#ffffff"/>
<rect x="366" y="1052" width="2" height="3" fill="#ffffff"/>
<rect x="366" y="1057" width="2" height="9" fill="#ffffff"/>
<circle cx="411" cy="1060" r="12" stroke="none" stroke-width="1" fill="url(#edge)"/>
<path d="M401,1062 Q404,1052 414,1053 Q421,1054 422,1061 L408,1061 Q409,1067 416,1068 Q420,1068 423,1066 Q418,1073 409,1071 Q400,1068 401,1062 Z" fill="#1565c0" opacity="0.7"/>
<rect x="437" y="1041" width="47" height="38" fill="#474541"/>
<rect x="437" y="1041" width="47" height="1" fill="#7a7874"/>
<rect x="437" y="1078" width="47" height="1" fill="#7a7874"/>
<rect x="437" y="1041" width="1" height="38" fill="#7a7874"/>
<rect x="483" y="1041" width="1" height="38" fill="#7a7874"/>
<rect x="486" y="1041" width="47" height="38" fill="#474541"/>
<rect x="486" y="1041" width="47" height="1" fill="#7a7874"/>
<rect x="486" y="1078" width="47" height="1" fill="#7a7874"/>
<rect x="486" y="1041" width="1" height="38" fill="#7a7874"/>
<rect x="532" y="1041" width="1" height="38" fill="#7a7874"/>
<rect x="584" y="1041" width="47" height="38" fill="#474541"/>
<rect x="584" y="1041" width="47" height="1" fill="#7a7874"/>
<rect x="584" y="1078" width="47" height="1" fill="#7a7874"/>
<rect x="584" y="1041" width="1" height="38" fill="#7a7874"/>
<rect x="630" y="1041" width="1" height="38" fill="#7a7874"/>
<rect x="682" y="1041" width="47" height="38" fill="#474541"/>
<rect x="682" y="1041" width="47" height="1" fill="#7a7874"/>
<rect x="682" y="1078" width="47" height="1" fill="#7a7874"/>
<rect x="682" y="1041" width="1" height="38" fill="#7a7874"/>
<rect x="728" y="1041" width="1" height="38" fill="#7a7874"/>
<rect x="731" y="1041" width="47" height="38" fill="#5a5854"/>
<rect x="731" y="1041" width="47" height="1" fill="#c8c8c8"/>
<rect x="731" y="1078" width="47" height="1" fill="#c8c8c8"/>
<rect x="731" y="1041" width="1" height="38" fill="#c8c8c8"/>
<rect x="777" y="1041" width="1" height="38" fill="#c8c8c8"/>
<rect x="780" y="1041" width="47" height="38" fill="#474541"/>
<rect x="780" y="1041" width="47" height="1" fill="#7a7874"/>
<rect x="780" y="1078" width="47" height="1" fill="#7a7874"/>
<rect x="780" y="1041" width="1" height="38" fill="#7a7874"/>
<rect x="826" y="1041" width="1" height="38" fill="#7a7874"/>
<path d="M448,1051 L455,1051 L457,1053 L471,1053 L471,1069 L448,1069 Z" fill="#e0a820" />
<rect x="448" y="1055" width="23" height="14" fill="#ffd45a"/>
<rect x="455" y="1061" width="10" height="9" fill="#2a7fd4"/>
<rect x="458" y="1065" width="4" height="4" fill="#ffd45a"/>
<ellipse cx="508" cy="1062" rx="11" ry="8" fill="#d8e0f0" stroke="#7090c0" stroke-width="1"/>
<circle cx="503" cy="1060" r="1.8" stroke="none" stroke-width="1" fill="#e03030"/>
<circle cx="507" cy="1057" r="1.8" stroke="none" stroke-width="1" fill="#30a030"/>
<circle cx="512" cy="1057" r="1.8" stroke="none" stroke-width="1" fill="#3060e0"/>
<circle cx="502" cy="1065" r="1.8" stroke="none" stroke-width="1" fill="#f0a000"/>
<path d="M511,1070 L521,1050" stroke="#e08020" stroke-width="2.5" fill="none" />
<rect x="549.5" y="1048.5" width="17" height="23" rx="1.5" fill="#d6eaff" stroke="#5a9ad8" stroke-width="1"/>
<rect x="551" y="1051" width="14" height="6" fill="#ffffff"/>
<rect x="551" y="1051" width="14" height="1" fill="#7aa8d8"/>
<rect x="551" y="1056" width="14" height="1" fill="#7aa8d8"/>
<rect x="551" y="1051" width="1" height="6" fill="#7aa8d8"/>
<rect x="564" y="1051" width="1" height="6" fill="#7aa8d8"/>
<text x="562" y="1056" font-family="Liberation Sans" font-size="6" fill="#203060" font-weight="bold" text-anchor="end" >0</text>
<rect x="551" y="1059" width="2.5" height="2.5" fill="#ffffff"/>
<rect x="554.5" y="1059" width="2.5" height="2.5" fill="#ffffff"/>
<rect x="558" y="1059" width="2.5" height="2.5" fill="#ffffff"/>
<rect x="551" y="1063" width="2.5" height="2.5" fill="#ffffff"/>
<rect x="554.5" y="1063" width="2.5" height="2.5" fill="#ffffff"/>
<rect x="558" y="1063" width="2.5" height="2.5" fill="#ffffff"/>
<rect x="551" y="1067" width="2.5" height="2.5" fill="#ffffff"/>
<rect x="554.5" y="1067" width="2.5" height="2.5" fill="#ffffff"/>
<rect x="558" y="1067" width="2.5" height="2.5" fill="#ffffff"/>
<rect x="562" y="1063" width="2" height="6" fill="#f0a020"/>
<rect x="595" y="1049" width="25" height="22" fill="#d0d0d0"/>
<rect x="595" y="1049" width="25" height="1" fill="#606060"/>
<rect x="595" y="1070" width="25" height="1" fill="#606060"/>
<rect x="595" y="1049" width="1" height="22" fill="#606060"/>
<rect x="619" y="1049" width="1" height="22" fill="#606060"/>
<rect x="599" y="1053" width="9" height="9" fill="#00e0f0"/>
<rect x="599" y="1053" width="9" height="1" fill="#000"/>
<rect x="599" y="1061" width="9" height="1" fill="#000"/>
<rect x="599" y="1053" width="1" height="9" fill="#000"/>
<rect x="607" y="1053" width="1" height="9" fill="#000"/>
<path d="M606,1058 L606,1068 L609,1065 L612,1069 L613,1068 L611,1064 L614,1064 Z" fill="#000" />
<rect x="615" y="1061" width="1" height="9" fill="#0040e0"/>
<rect x="610" y="1069" width="6" height="1" fill="#0040e0"/>
<path d="M612,1050 L612,1056 L617,1056" stroke="#e03030" stroke-width="1" fill="none" />
<rect x="644" y="1049" width="24" height="22" fill="#d8d8d8"/>
<rect x="644" y="1049" width="24" height="1" fill="#505050"/>
<rect x="644" y="1070" width="24" height="1" fill="#505050"/>
<rect x="644" y="1049" width="1" height="22" fill="#505050"/>
<rect x="667" y="1049" width="1" height="22" fill="#505050"/>
<path d="M646,1053 L652,1053 L656,1060 L665,1060 M646,1066 L654,1066 L658,1056 L666,1056" stroke="#e02020" stroke-width="1.5" fill="none" />
<path d="M647,1060 L655,1060 L660,1052 L666,1052" stroke="#10c010" stroke-width="1.5" fill="none" />
<path d="M654,1058 L654,1068 L657,1065 L660,1069 L661,1068 L659,1064 L662,1064 Z" fill="#000" />
<circle cx="705" cy="1060" r="12" stroke="none" stroke-width="1" fill="#db3a2f"/>
<path d="M705,1060 L715.4,1066 A12,12 0 0 1 694.6,1066 Z" fill="#1e9e4a" />
<path d="M705,1060 L715.4,1066 A12,12 0 0 0 705,1048 Z" fill="#f6c026" />
<path d="M705,1048 A12,12 0 0 1 715.4,1066 L705,1060 Z" fill="#f6c026" />
<path d="M705,1060 L694.6,1066 A12,12 0 0 1 705,1048 L705,1060 Z" fill="#db3a2f" />
<path d="M694.6,1066 A12,12 0 0 0 715.4,1066 L705,1060 Z" fill="#1e9e4a" />
<circle cx="705" cy="1060" r="5.5" stroke="none" stroke-width="1" fill="#ffffff"/>
<circle cx="705" cy="1060" r="4.3" stroke="none" stroke-width="1" fill="#1a73e8"/>
<rect x="742" y="1048" width="24" height="24" rx="4" fill="#3c3c80"/>
<rect x="745" y="1052" width="12" height="1" fill="#d0c8f0"/>
<rect x="745" y="1055" width="16" height="1" fill="#d0c8f0"/>
<rect x="758" y="1058" width="7" height="1" fill="#d0c8f0"/>
<rect x="745" y="1061" width="8" height="1" fill="#d0c8f0"/>
<rect x="753" y="1063" width="1" height="7" fill="#e0c070"/>
<rect x="757" y="1063" width="1" height="7" fill="#e0c070"/>
<rect x="761" y="1063" width="1" height="7" fill="#e0c070"/>
<rect x="745" y="1066" width="6" height="1" fill="#e0b040"/>
<rect x="791" y="1048" width="24" height="24" rx="4" fill="#1f8fe8"/>
<path d="M793,1070 L802,1057 L813,1070 Z" fill="#6fd0ff" />
<circle cx="809" cy="1053" r="2" stroke="none" stroke-width="1" fill="#ffffff"/>
<path d="M1645,1063 L1650,1058 L1655,1063" stroke="#ffffff" stroke-width="1.3" fill="none" />
<rect x="1670" y="1054" width="10" height="1" fill="#ffffff"/>
<rect x="1670" y="1065" width="10" height="1" fill="#ffffff"/>
<rect x="1670" y="1054" width="1" height="12" fill="#ffffff"/>
<rect x="1679" y="1054" width="1" height="12" fill="#ffffff"/>
<circle cx="1674.5" cy="1059.5" r="2" stroke="#fff" stroke-width="1" fill="none"/>
<rect x="1692" y="1055" width="12" height="1" fill="#ffffff"/>
<rect x="1692" y="1063" width="12" height="1" fill="#ffffff"/>
<rect x="1692" y="1055" width="1" height="9" fill="#ffffff"/>
<rect x="1703" y="1055" width="1" height="9" fill="#ffffff"/>
<rect x="1694" y="1057" width="6" height="5" fill="#ffffff"/>
<rect x="1704" y="1057" width="2" height="4" fill="#ffffff"/>
<rect x="1715" y="1053" width="15" height="1" fill="#ffffff"/>
<rect x="1715" y="1063" width="15" height="1" fill="#ffffff"/>
<rect x="1715" y="1053" width="1" height="11" fill="#ffffff"/>
<rect x="1729" y="1053" width="1" height="11" fill="#ffffff"/>
<rect x="1722" y="1063" width="1" height="5" fill="#ffffff"/>
<rect x="1718" y="1067" width="9" height="1" fill="#ffffff"/>
<path d="M1740,1057 L1743,1057 L1747,1053 L1747,1067 L1743,1063 L1740,1063 Z" fill="#ffffff" />
<path d="M1750,1057 Q1752,1060 1750,1063 M1753,1055 Q1756,1060 1753,1065" stroke="#ffffff" stroke-width="1" fill="none" />
<text x="1777" y="1064.5" font-family="Liberation Sans" font-size="12" fill="#ffffff" font-weight="normal" text-anchor="middle" textLength="26" lengthAdjust="spacingAndGlyphs" >РУС</text>
<text x="1827.5" y="1055" font-family="Liberation Sans" font-size="12" fill="#ffffff" font-weight="normal" text-anchor="middle" textLength="27" lengthAdjust="spacingAndGlyphs" >13:07</text>
<text x="1827.5" y="1073.5" font-family="Liberation Sans" font-size="12" fill="#ffffff" font-weight="normal" text-anchor="middle" textLength="53" lengthAdjust="spacingAndGlyphs" >14.08.2025</text>
<path d="M1873.5,1051.5 L1888.5,1051.5 L1888.5,1064.5 L1880,1064.5 L1876,1068 L1876,1064.5 L1873.5,1064.5 Z" stroke="#ffffff" stroke-width="1" fill="none" /></svg></body></html>
